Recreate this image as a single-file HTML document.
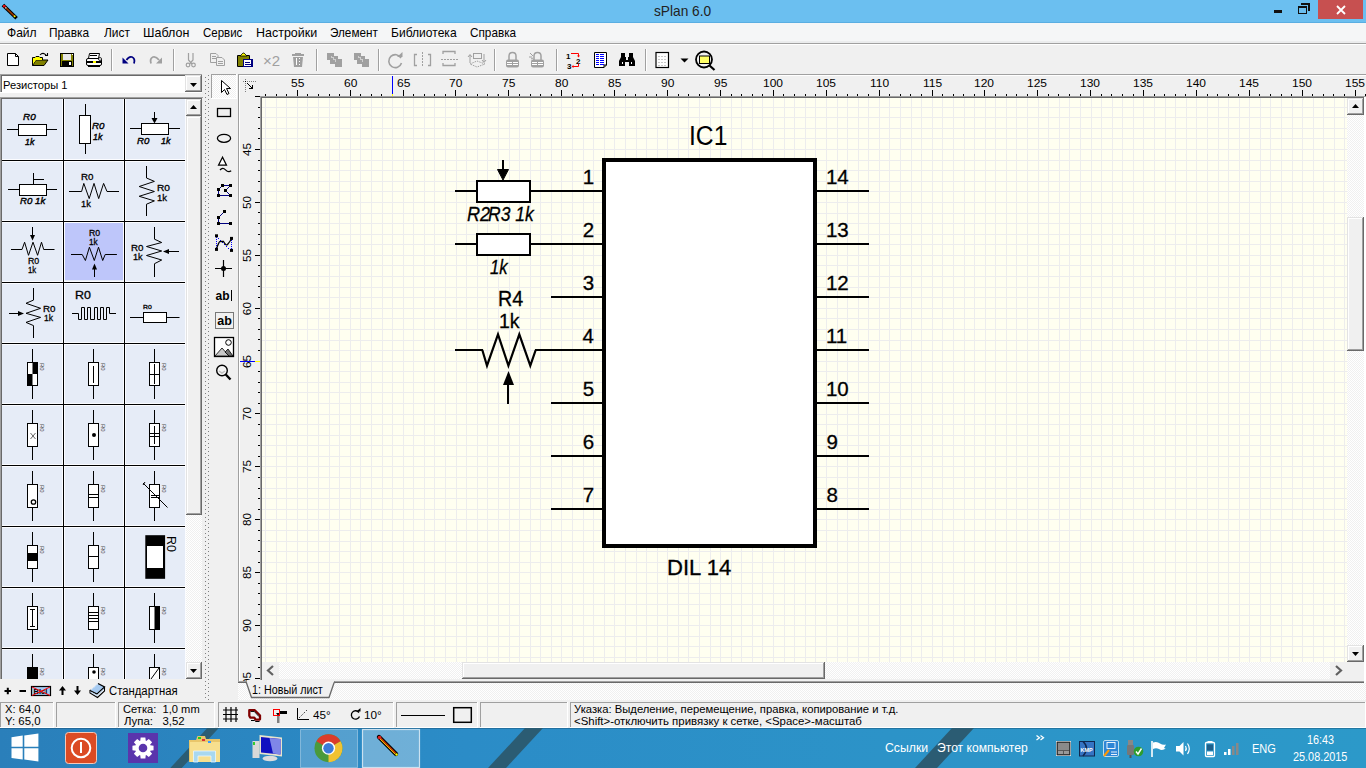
<!DOCTYPE html><html><head><meta charset="utf-8"><style>
html,body{margin:0;padding:0;width:1366px;height:768px;overflow:hidden;background:#f0f0f0;font-family:"Liberation Sans",sans-serif;}
.r,.t,.s{position:absolute;}
.t{white-space:pre;}
</style></head><body>
<div class="r" style="left:0px;top:0px;width:1366px;height:22px;background:#6bbff0;"></div>
<div class="r" style="left:0px;top:22px;width:1366px;height:1px;background:#5aaee2;"></div>
<svg class="s" style="left:0px;top:0px;" width="20" height="22" viewBox="0 0 20 22"><line x1="4.2" y1="6.2" x2="15.3" y2="17" stroke="#000" stroke-width="3.6" stroke-linecap="square"/><line x1="5.5" y1="7.5" x2="14" y2="15.8" stroke="#a33a00" stroke-width="1.6"/><rect x="3" y="5" width="2.6" height="2.4" fill="#e01010"/><rect x="5" y="7" width="1.5" height="1.5" fill="#b0b0b0"/><circle cx="14.6" cy="16.3" r="1" fill="#ff0"/></svg>
<div class="t" style="left:653.72px;top:4.27px;font-size:14.8px;line-height:14.8px;color:#222;font-weight:normal;font-style:normal;transform:scaleX(0.9253);transform-origin:0 0;">sPlan 6.0</div>
<div class="r" style="left:1274px;top:10px;width:8px;height:3px;background:#111;"></div>
<svg class="s" style="left:1298px;top:3px;" width="12" height="11" viewBox="0 0 12 11" shape-rendering="crispEdges"><rect x="0" y="3" width="9" height="8" fill="#111"/><rect x="1" y="5" width="7" height="5" fill="#6bbff0"/><rect x="3" y="0" width="9" height="2" fill="#111"/><rect x="10" y="0" width="2" height="8" fill="#111"/></svg>
<div class="r" style="left:1318px;top:0px;width:45px;height:19px;background:#c75050;"></div>
<svg class="s" style="left:1336px;top:5px;" width="10" height="10" viewBox="0 0 10 10"><path d="M1 1L9 9M9 1L1 9" stroke="#fff" stroke-width="1.8"/></svg>
<div class="r" style="left:0px;top:23px;width:1366px;height:18px;background:#f5f6f7;"></div>
<div class="r" style="left:0px;top:41px;width:1366px;height:2px;background:#ebeced;"></div>
<div class="r" style="left:0px;top:43px;width:1366px;height:1px;background:#a0a0a0;"></div>
<div class="r" style="left:0px;top:44px;width:1366px;height:1px;background:#ffffff;"></div>
<div class="t" style="left:6.81px;top:26.00px;font-size:13px;line-height:13px;color:#000;font-weight:normal;font-style:normal;transform:scaleX(0.9272);transform-origin:0 0;">Файл</div>
<div class="t" style="left:49.44px;top:26.00px;font-size:13px;line-height:13px;color:#000;font-weight:normal;font-style:normal;transform:scaleX(0.9125);transform-origin:0 0;">Правка</div>
<div class="t" style="left:104.10px;top:26.00px;font-size:13px;line-height:13px;color:#000;font-weight:normal;font-style:normal;transform:scaleX(0.9170);transform-origin:0 0;">Лист</div>
<div class="t" style="left:143.27px;top:26.00px;font-size:13px;line-height:13px;color:#000;font-weight:normal;font-style:normal;transform:scaleX(0.9617);transform-origin:0 0;">Шаблон</div>
<div class="t" style="left:203.01px;top:26.00px;font-size:13px;line-height:13px;color:#000;font-weight:normal;font-style:normal;transform:scaleX(0.8827);transform-origin:0 0;">Сервис</div>
<div class="t" style="left:255.97px;top:26.00px;font-size:13px;line-height:13px;color:#000;font-weight:normal;font-style:normal;transform:scaleX(0.9598);transform-origin:0 0;">Настройки</div>
<div class="t" style="left:330.40px;top:26.00px;font-size:13px;line-height:13px;color:#000;font-weight:normal;font-style:normal;transform:scaleX(0.9013);transform-origin:0 0;">Элемент</div>
<div class="t" style="left:391.00px;top:26.00px;font-size:13px;line-height:13px;color:#000;font-weight:normal;font-style:normal;transform:scaleX(0.9280);transform-origin:0 0;">Библиотека</div>
<div class="t" style="left:470.40px;top:26.00px;font-size:13px;line-height:13px;color:#000;font-weight:normal;font-style:normal;transform:scaleX(0.9041);transform-origin:0 0;">Справка</div>
<div class="r" style="left:0px;top:45px;width:1366px;height:29px;background:#f0f0f0;"></div>
<div class="r" style="left:111px;top:49px;width:1px;height:22px;background:#a0a0a0;"></div>
<div class="r" style="left:112px;top:49px;width:1px;height:22px;background:#ffffff;"></div>
<div class="r" style="left:173px;top:49px;width:1px;height:22px;background:#a0a0a0;"></div>
<div class="r" style="left:174px;top:49px;width:1px;height:22px;background:#ffffff;"></div>
<div class="r" style="left:316px;top:49px;width:1px;height:22px;background:#a0a0a0;"></div>
<div class="r" style="left:317px;top:49px;width:1px;height:22px;background:#ffffff;"></div>
<div class="r" style="left:378px;top:49px;width:1px;height:22px;background:#a0a0a0;"></div>
<div class="r" style="left:379px;top:49px;width:1px;height:22px;background:#ffffff;"></div>
<div class="r" style="left:494px;top:49px;width:1px;height:22px;background:#a0a0a0;"></div>
<div class="r" style="left:495px;top:49px;width:1px;height:22px;background:#ffffff;"></div>
<div class="r" style="left:556px;top:49px;width:1px;height:22px;background:#a0a0a0;"></div>
<div class="r" style="left:557px;top:49px;width:1px;height:22px;background:#ffffff;"></div>
<div class="r" style="left:645px;top:49px;width:1px;height:22px;background:#a0a0a0;"></div>
<div class="r" style="left:646px;top:49px;width:1px;height:22px;background:#ffffff;"></div>
<div class="r" style="left:0px;top:74px;width:1366px;height:654px;background:#f0f0f0;"></div>
<div class="r" style="left:0px;top:74px;width:202px;height:19px;background:#ffffff;"></div>
<div class="r" style="left:0px;top:74px;width:202px;height:1px;background:#a0a0a0;"></div>
<div class="r" style="left:0px;top:75px;width:201px;height:1px;background:#696969;"></div>
<div class="r" style="left:0px;top:74px;width:1px;height:19px;background:#a0a0a0;"></div>
<div class="r" style="left:1px;top:75px;width:1px;height:17px;background:#696969;"></div>
<div class="r" style="left:0px;top:92px;width:202px;height:1px;background:#ffffff;"></div>
<div class="r" style="left:185px;top:75px;width:17px;height:17px;background:#696969;"></div>
<div class="r" style="left:185px;top:75px;width:16px;height:16px;background:#e3e3e3;"></div>
<div class="r" style="left:186px;top:76px;width:15px;height:15px;background:#a0a0a0;"></div>
<div class="r" style="left:186px;top:76px;width:14px;height:14px;background:#ffffff;"></div>
<div class="r" style="left:187px;top:77px;width:13px;height:13px;background:#f0f0f0;"></div>
<svg class="s" style="left:190px;top:83px;" width="7" height="4" viewBox="0 0 7 4"><path d="M0 0H7L3.5 4Z" fill="#000"/></svg>
<div class="t" style="left:2.68px;top:79.18px;font-size:11.6px;line-height:11.6px;color:#000;font-weight:normal;font-style:normal;transform:scaleX(0.9604);transform-origin:0 0;">Резисторы 1</div>
<svg class="s" style="left:205px;top:75px;" width="4" height="625" viewBox="0 0 4 625" shape-rendering="crispEdges"><rect x="0" y="2" width="1" height="1" fill="#808080"/><rect x="3" y="0" width="1" height="1" fill="#808080"/><rect x="0" y="6" width="1" height="1" fill="#808080"/><rect x="3" y="4" width="1" height="1" fill="#808080"/><rect x="0" y="10" width="1" height="1" fill="#808080"/><rect x="3" y="8" width="1" height="1" fill="#808080"/><rect x="0" y="14" width="1" height="1" fill="#808080"/><rect x="3" y="12" width="1" height="1" fill="#808080"/><rect x="0" y="18" width="1" height="1" fill="#808080"/><rect x="3" y="16" width="1" height="1" fill="#808080"/><rect x="0" y="22" width="1" height="1" fill="#808080"/><rect x="3" y="20" width="1" height="1" fill="#808080"/><rect x="0" y="26" width="1" height="1" fill="#808080"/><rect x="3" y="24" width="1" height="1" fill="#808080"/><rect x="0" y="30" width="1" height="1" fill="#808080"/><rect x="3" y="28" width="1" height="1" fill="#808080"/><rect x="0" y="34" width="1" height="1" fill="#808080"/><rect x="3" y="32" width="1" height="1" fill="#808080"/><rect x="0" y="38" width="1" height="1" fill="#808080"/><rect x="3" y="36" width="1" height="1" fill="#808080"/><rect x="0" y="42" width="1" height="1" fill="#808080"/><rect x="3" y="40" width="1" height="1" fill="#808080"/><rect x="0" y="46" width="1" height="1" fill="#808080"/><rect x="3" y="44" width="1" height="1" fill="#808080"/><rect x="0" y="50" width="1" height="1" fill="#808080"/><rect x="3" y="48" width="1" height="1" fill="#808080"/><rect x="0" y="54" width="1" height="1" fill="#808080"/><rect x="3" y="52" width="1" height="1" fill="#808080"/><rect x="0" y="58" width="1" height="1" fill="#808080"/><rect x="3" y="56" width="1" height="1" fill="#808080"/><rect x="0" y="62" width="1" height="1" fill="#808080"/><rect x="3" y="60" width="1" height="1" fill="#808080"/><rect x="0" y="66" width="1" height="1" fill="#808080"/><rect x="3" y="64" width="1" height="1" fill="#808080"/><rect x="0" y="70" width="1" height="1" fill="#808080"/><rect x="3" y="68" width="1" height="1" fill="#808080"/><rect x="0" y="74" width="1" height="1" fill="#808080"/><rect x="3" y="72" width="1" height="1" fill="#808080"/><rect x="0" y="78" width="1" height="1" fill="#808080"/><rect x="3" y="76" width="1" height="1" fill="#808080"/><rect x="0" y="82" width="1" height="1" fill="#808080"/><rect x="3" y="80" width="1" height="1" fill="#808080"/><rect x="0" y="86" width="1" height="1" fill="#808080"/><rect x="3" y="84" width="1" height="1" fill="#808080"/><rect x="0" y="90" width="1" height="1" fill="#808080"/><rect x="3" y="88" width="1" height="1" fill="#808080"/><rect x="0" y="94" width="1" height="1" fill="#808080"/><rect x="3" y="92" width="1" height="1" fill="#808080"/><rect x="0" y="98" width="1" height="1" fill="#808080"/><rect x="3" y="96" width="1" height="1" fill="#808080"/><rect x="0" y="102" width="1" height="1" fill="#808080"/><rect x="3" y="100" width="1" height="1" fill="#808080"/><rect x="0" y="106" width="1" height="1" fill="#808080"/><rect x="3" y="104" width="1" height="1" fill="#808080"/><rect x="0" y="110" width="1" height="1" fill="#808080"/><rect x="3" y="108" width="1" height="1" fill="#808080"/><rect x="0" y="114" width="1" height="1" fill="#808080"/><rect x="3" y="112" width="1" height="1" fill="#808080"/><rect x="0" y="118" width="1" height="1" fill="#808080"/><rect x="3" y="116" width="1" height="1" fill="#808080"/><rect x="0" y="122" width="1" height="1" fill="#808080"/><rect x="3" y="120" width="1" height="1" fill="#808080"/><rect x="0" y="126" width="1" height="1" fill="#808080"/><rect x="3" y="124" width="1" height="1" fill="#808080"/><rect x="0" y="130" width="1" height="1" fill="#808080"/><rect x="3" y="128" width="1" height="1" fill="#808080"/><rect x="0" y="134" width="1" height="1" fill="#808080"/><rect x="3" y="132" width="1" height="1" fill="#808080"/><rect x="0" y="138" width="1" height="1" fill="#808080"/><rect x="3" y="136" width="1" height="1" fill="#808080"/><rect x="0" y="142" width="1" height="1" fill="#808080"/><rect x="3" y="140" width="1" height="1" fill="#808080"/><rect x="0" y="146" width="1" height="1" fill="#808080"/><rect x="3" y="144" width="1" height="1" fill="#808080"/><rect x="0" y="150" width="1" height="1" fill="#808080"/><rect x="3" y="148" width="1" height="1" fill="#808080"/><rect x="0" y="154" width="1" height="1" fill="#808080"/><rect x="3" y="152" width="1" height="1" fill="#808080"/><rect x="0" y="158" width="1" height="1" fill="#808080"/><rect x="3" y="156" width="1" height="1" fill="#808080"/><rect x="0" y="162" width="1" height="1" fill="#808080"/><rect x="3" y="160" width="1" height="1" fill="#808080"/><rect x="0" y="166" width="1" height="1" fill="#808080"/><rect x="3" y="164" width="1" height="1" fill="#808080"/><rect x="0" y="170" width="1" height="1" fill="#808080"/><rect x="3" y="168" width="1" height="1" fill="#808080"/><rect x="0" y="174" width="1" height="1" fill="#808080"/><rect x="3" y="172" width="1" height="1" fill="#808080"/><rect x="0" y="178" width="1" height="1" fill="#808080"/><rect x="3" y="176" width="1" height="1" fill="#808080"/><rect x="0" y="182" width="1" height="1" fill="#808080"/><rect x="3" y="180" width="1" height="1" fill="#808080"/><rect x="0" y="186" width="1" height="1" fill="#808080"/><rect x="3" y="184" width="1" height="1" fill="#808080"/><rect x="0" y="190" width="1" height="1" fill="#808080"/><rect x="3" y="188" width="1" height="1" fill="#808080"/><rect x="0" y="194" width="1" height="1" fill="#808080"/><rect x="3" y="192" width="1" height="1" fill="#808080"/><rect x="0" y="198" width="1" height="1" fill="#808080"/><rect x="3" y="196" width="1" height="1" fill="#808080"/><rect x="0" y="202" width="1" height="1" fill="#808080"/><rect x="3" y="200" width="1" height="1" fill="#808080"/><rect x="0" y="206" width="1" height="1" fill="#808080"/><rect x="3" y="204" width="1" height="1" fill="#808080"/><rect x="0" y="210" width="1" height="1" fill="#808080"/><rect x="3" y="208" width="1" height="1" fill="#808080"/><rect x="0" y="214" width="1" height="1" fill="#808080"/><rect x="3" y="212" width="1" height="1" fill="#808080"/><rect x="0" y="218" width="1" height="1" fill="#808080"/><rect x="3" y="216" width="1" height="1" fill="#808080"/><rect x="0" y="222" width="1" height="1" fill="#808080"/><rect x="3" y="220" width="1" height="1" fill="#808080"/><rect x="0" y="226" width="1" height="1" fill="#808080"/><rect x="3" y="224" width="1" height="1" fill="#808080"/><rect x="0" y="230" width="1" height="1" fill="#808080"/><rect x="3" y="228" width="1" height="1" fill="#808080"/><rect x="0" y="234" width="1" height="1" fill="#808080"/><rect x="3" y="232" width="1" height="1" fill="#808080"/><rect x="0" y="238" width="1" height="1" fill="#808080"/><rect x="3" y="236" width="1" height="1" fill="#808080"/><rect x="0" y="242" width="1" height="1" fill="#808080"/><rect x="3" y="240" width="1" height="1" fill="#808080"/><rect x="0" y="246" width="1" height="1" fill="#808080"/><rect x="3" y="244" width="1" height="1" fill="#808080"/><rect x="0" y="250" width="1" height="1" fill="#808080"/><rect x="3" y="248" width="1" height="1" fill="#808080"/><rect x="0" y="254" width="1" height="1" fill="#808080"/><rect x="3" y="252" width="1" height="1" fill="#808080"/><rect x="0" y="258" width="1" height="1" fill="#808080"/><rect x="3" y="256" width="1" height="1" fill="#808080"/><rect x="0" y="262" width="1" height="1" fill="#808080"/><rect x="3" y="260" width="1" height="1" fill="#808080"/><rect x="0" y="266" width="1" height="1" fill="#808080"/><rect x="3" y="264" width="1" height="1" fill="#808080"/><rect x="0" y="270" width="1" height="1" fill="#808080"/><rect x="3" y="268" width="1" height="1" fill="#808080"/><rect x="0" y="274" width="1" height="1" fill="#808080"/><rect x="3" y="272" width="1" height="1" fill="#808080"/><rect x="0" y="278" width="1" height="1" fill="#808080"/><rect x="3" y="276" width="1" height="1" fill="#808080"/><rect x="0" y="282" width="1" height="1" fill="#808080"/><rect x="3" y="280" width="1" height="1" fill="#808080"/><rect x="0" y="286" width="1" height="1" fill="#808080"/><rect x="3" y="284" width="1" height="1" fill="#808080"/><rect x="0" y="290" width="1" height="1" fill="#808080"/><rect x="3" y="288" width="1" height="1" fill="#808080"/><rect x="0" y="294" width="1" height="1" fill="#808080"/><rect x="3" y="292" width="1" height="1" fill="#808080"/><rect x="0" y="298" width="1" height="1" fill="#808080"/><rect x="3" y="296" width="1" height="1" fill="#808080"/><rect x="0" y="302" width="1" height="1" fill="#808080"/><rect x="3" y="300" width="1" height="1" fill="#808080"/><rect x="0" y="306" width="1" height="1" fill="#808080"/><rect x="3" y="304" width="1" height="1" fill="#808080"/><rect x="0" y="310" width="1" height="1" fill="#808080"/><rect x="3" y="308" width="1" height="1" fill="#808080"/><rect x="0" y="314" width="1" height="1" fill="#808080"/><rect x="3" y="312" width="1" height="1" fill="#808080"/><rect x="0" y="318" width="1" height="1" fill="#808080"/><rect x="3" y="316" width="1" height="1" fill="#808080"/><rect x="0" y="322" width="1" height="1" fill="#808080"/><rect x="3" y="320" width="1" height="1" fill="#808080"/><rect x="0" y="326" width="1" height="1" fill="#808080"/><rect x="3" y="324" width="1" height="1" fill="#808080"/><rect x="0" y="330" width="1" height="1" fill="#808080"/><rect x="3" y="328" width="1" height="1" fill="#808080"/><rect x="0" y="334" width="1" height="1" fill="#808080"/><rect x="3" y="332" width="1" height="1" fill="#808080"/><rect x="0" y="338" width="1" height="1" fill="#808080"/><rect x="3" y="336" width="1" height="1" fill="#808080"/><rect x="0" y="342" width="1" height="1" fill="#808080"/><rect x="3" y="340" width="1" height="1" fill="#808080"/><rect x="0" y="346" width="1" height="1" fill="#808080"/><rect x="3" y="344" width="1" height="1" fill="#808080"/><rect x="0" y="350" width="1" height="1" fill="#808080"/><rect x="3" y="348" width="1" height="1" fill="#808080"/><rect x="0" y="354" width="1" height="1" fill="#808080"/><rect x="3" y="352" width="1" height="1" fill="#808080"/><rect x="0" y="358" width="1" height="1" fill="#808080"/><rect x="3" y="356" width="1" height="1" fill="#808080"/><rect x="0" y="362" width="1" height="1" fill="#808080"/><rect x="3" y="360" width="1" height="1" fill="#808080"/><rect x="0" y="366" width="1" height="1" fill="#808080"/><rect x="3" y="364" width="1" height="1" fill="#808080"/><rect x="0" y="370" width="1" height="1" fill="#808080"/><rect x="3" y="368" width="1" height="1" fill="#808080"/><rect x="0" y="374" width="1" height="1" fill="#808080"/><rect x="3" y="372" width="1" height="1" fill="#808080"/><rect x="0" y="378" width="1" height="1" fill="#808080"/><rect x="3" y="376" width="1" height="1" fill="#808080"/><rect x="0" y="382" width="1" height="1" fill="#808080"/><rect x="3" y="380" width="1" height="1" fill="#808080"/><rect x="0" y="386" width="1" height="1" fill="#808080"/><rect x="3" y="384" width="1" height="1" fill="#808080"/><rect x="0" y="390" width="1" height="1" fill="#808080"/><rect x="3" y="388" width="1" height="1" fill="#808080"/><rect x="0" y="394" width="1" height="1" fill="#808080"/><rect x="3" y="392" width="1" height="1" fill="#808080"/><rect x="0" y="398" width="1" height="1" fill="#808080"/><rect x="3" y="396" width="1" height="1" fill="#808080"/><rect x="0" y="402" width="1" height="1" fill="#808080"/><rect x="3" y="400" width="1" height="1" fill="#808080"/><rect x="0" y="406" width="1" height="1" fill="#808080"/><rect x="3" y="404" width="1" height="1" fill="#808080"/><rect x="0" y="410" width="1" height="1" fill="#808080"/><rect x="3" y="408" width="1" height="1" fill="#808080"/><rect x="0" y="414" width="1" height="1" fill="#808080"/><rect x="3" y="412" width="1" height="1" fill="#808080"/><rect x="0" y="418" width="1" height="1" fill="#808080"/><rect x="3" y="416" width="1" height="1" fill="#808080"/><rect x="0" y="422" width="1" height="1" fill="#808080"/><rect x="3" y="420" width="1" height="1" fill="#808080"/><rect x="0" y="426" width="1" height="1" fill="#808080"/><rect x="3" y="424" width="1" height="1" fill="#808080"/><rect x="0" y="430" width="1" height="1" fill="#808080"/><rect x="3" y="428" width="1" height="1" fill="#808080"/><rect x="0" y="434" width="1" height="1" fill="#808080"/><rect x="3" y="432" width="1" height="1" fill="#808080"/><rect x="0" y="438" width="1" height="1" fill="#808080"/><rect x="3" y="436" width="1" height="1" fill="#808080"/><rect x="0" y="442" width="1" height="1" fill="#808080"/><rect x="3" y="440" width="1" height="1" fill="#808080"/><rect x="0" y="446" width="1" height="1" fill="#808080"/><rect x="3" y="444" width="1" height="1" fill="#808080"/><rect x="0" y="450" width="1" height="1" fill="#808080"/><rect x="3" y="448" width="1" height="1" fill="#808080"/><rect x="0" y="454" width="1" height="1" fill="#808080"/><rect x="3" y="452" width="1" height="1" fill="#808080"/><rect x="0" y="458" width="1" height="1" fill="#808080"/><rect x="3" y="456" width="1" height="1" fill="#808080"/><rect x="0" y="462" width="1" height="1" fill="#808080"/><rect x="3" y="460" width="1" height="1" fill="#808080"/><rect x="0" y="466" width="1" height="1" fill="#808080"/><rect x="3" y="464" width="1" height="1" fill="#808080"/><rect x="0" y="470" width="1" height="1" fill="#808080"/><rect x="3" y="468" width="1" height="1" fill="#808080"/><rect x="0" y="474" width="1" height="1" fill="#808080"/><rect x="3" y="472" width="1" height="1" fill="#808080"/><rect x="0" y="478" width="1" height="1" fill="#808080"/><rect x="3" y="476" width="1" height="1" fill="#808080"/><rect x="0" y="482" width="1" height="1" fill="#808080"/><rect x="3" y="480" width="1" height="1" fill="#808080"/><rect x="0" y="486" width="1" height="1" fill="#808080"/><rect x="3" y="484" width="1" height="1" fill="#808080"/><rect x="0" y="490" width="1" height="1" fill="#808080"/><rect x="3" y="488" width="1" height="1" fill="#808080"/><rect x="0" y="494" width="1" height="1" fill="#808080"/><rect x="3" y="492" width="1" height="1" fill="#808080"/><rect x="0" y="498" width="1" height="1" fill="#808080"/><rect x="3" y="496" width="1" height="1" fill="#808080"/><rect x="0" y="502" width="1" height="1" fill="#808080"/><rect x="3" y="500" width="1" height="1" fill="#808080"/><rect x="0" y="506" width="1" height="1" fill="#808080"/><rect x="3" y="504" width="1" height="1" fill="#808080"/><rect x="0" y="510" width="1" height="1" fill="#808080"/><rect x="3" y="508" width="1" height="1" fill="#808080"/><rect x="0" y="514" width="1" height="1" fill="#808080"/><rect x="3" y="512" width="1" height="1" fill="#808080"/><rect x="0" y="518" width="1" height="1" fill="#808080"/><rect x="3" y="516" width="1" height="1" fill="#808080"/><rect x="0" y="522" width="1" height="1" fill="#808080"/><rect x="3" y="520" width="1" height="1" fill="#808080"/><rect x="0" y="526" width="1" height="1" fill="#808080"/><rect x="3" y="524" width="1" height="1" fill="#808080"/><rect x="0" y="530" width="1" height="1" fill="#808080"/><rect x="3" y="528" width="1" height="1" fill="#808080"/><rect x="0" y="534" width="1" height="1" fill="#808080"/><rect x="3" y="532" width="1" height="1" fill="#808080"/><rect x="0" y="538" width="1" height="1" fill="#808080"/><rect x="3" y="536" width="1" height="1" fill="#808080"/><rect x="0" y="542" width="1" height="1" fill="#808080"/><rect x="3" y="540" width="1" height="1" fill="#808080"/><rect x="0" y="546" width="1" height="1" fill="#808080"/><rect x="3" y="544" width="1" height="1" fill="#808080"/><rect x="0" y="550" width="1" height="1" fill="#808080"/><rect x="3" y="548" width="1" height="1" fill="#808080"/><rect x="0" y="554" width="1" height="1" fill="#808080"/><rect x="3" y="552" width="1" height="1" fill="#808080"/><rect x="0" y="558" width="1" height="1" fill="#808080"/><rect x="3" y="556" width="1" height="1" fill="#808080"/><rect x="0" y="562" width="1" height="1" fill="#808080"/><rect x="3" y="560" width="1" height="1" fill="#808080"/><rect x="0" y="566" width="1" height="1" fill="#808080"/><rect x="3" y="564" width="1" height="1" fill="#808080"/><rect x="0" y="570" width="1" height="1" fill="#808080"/><rect x="3" y="568" width="1" height="1" fill="#808080"/><rect x="0" y="574" width="1" height="1" fill="#808080"/><rect x="3" y="572" width="1" height="1" fill="#808080"/><rect x="0" y="578" width="1" height="1" fill="#808080"/><rect x="3" y="576" width="1" height="1" fill="#808080"/><rect x="0" y="582" width="1" height="1" fill="#808080"/><rect x="3" y="580" width="1" height="1" fill="#808080"/><rect x="0" y="586" width="1" height="1" fill="#808080"/><rect x="3" y="584" width="1" height="1" fill="#808080"/><rect x="0" y="590" width="1" height="1" fill="#808080"/><rect x="3" y="588" width="1" height="1" fill="#808080"/><rect x="0" y="594" width="1" height="1" fill="#808080"/><rect x="3" y="592" width="1" height="1" fill="#808080"/><rect x="0" y="598" width="1" height="1" fill="#808080"/><rect x="3" y="596" width="1" height="1" fill="#808080"/><rect x="0" y="602" width="1" height="1" fill="#808080"/><rect x="3" y="600" width="1" height="1" fill="#808080"/><rect x="0" y="606" width="1" height="1" fill="#808080"/><rect x="3" y="604" width="1" height="1" fill="#808080"/><rect x="0" y="610" width="1" height="1" fill="#808080"/><rect x="3" y="608" width="1" height="1" fill="#808080"/><rect x="0" y="614" width="1" height="1" fill="#808080"/><rect x="3" y="612" width="1" height="1" fill="#808080"/><rect x="0" y="618" width="1" height="1" fill="#808080"/><rect x="3" y="616" width="1" height="1" fill="#808080"/><rect x="0" y="622" width="1" height="1" fill="#808080"/><rect x="3" y="620" width="1" height="1" fill="#808080"/><rect x="0" y="626" width="1" height="1" fill="#808080"/><rect x="3" y="624" width="1" height="1" fill="#808080"/></svg>
<div class="r" style="left:0px;top:97px;width:202px;height:582px;background:#f0f0f0;"></div>
<div class="r" style="left:0px;top:97px;width:203px;height:1px;background:#a0a0a0;"></div>
<div class="r" style="left:0px;top:98px;width:202px;height:1px;background:#696969;"></div>
<div class="r" style="left:0px;top:97px;width:1px;height:582px;background:#a0a0a0;"></div>
<div class="r" style="left:1px;top:98px;width:1px;height:581px;background:#696969;"></div>
<div class="r" style="left:2px;top:99px;width:184px;height:580px;background:#e6ecf7;"></div>
<div class="r" style="left:2px;top:159px;width:184px;height:1px;background:#fbfcff;"></div>
<div class="r" style="left:2px;top:161px;width:184px;height:1px;background:#fbfcff;"></div>
<div class="r" style="left:2px;top:220px;width:184px;height:1px;background:#fbfcff;"></div>
<div class="r" style="left:2px;top:222px;width:184px;height:1px;background:#fbfcff;"></div>
<div class="r" style="left:2px;top:281px;width:184px;height:1px;background:#fbfcff;"></div>
<div class="r" style="left:2px;top:283px;width:184px;height:1px;background:#fbfcff;"></div>
<div class="r" style="left:2px;top:342px;width:184px;height:1px;background:#fbfcff;"></div>
<div class="r" style="left:2px;top:344px;width:184px;height:1px;background:#fbfcff;"></div>
<div class="r" style="left:2px;top:403px;width:184px;height:1px;background:#fbfcff;"></div>
<div class="r" style="left:2px;top:405px;width:184px;height:1px;background:#fbfcff;"></div>
<div class="r" style="left:2px;top:464px;width:184px;height:1px;background:#fbfcff;"></div>
<div class="r" style="left:2px;top:466px;width:184px;height:1px;background:#fbfcff;"></div>
<div class="r" style="left:2px;top:525px;width:184px;height:1px;background:#fbfcff;"></div>
<div class="r" style="left:2px;top:527px;width:184px;height:1px;background:#fbfcff;"></div>
<div class="r" style="left:2px;top:586px;width:184px;height:1px;background:#fbfcff;"></div>
<div class="r" style="left:2px;top:588px;width:184px;height:1px;background:#fbfcff;"></div>
<div class="r" style="left:2px;top:647px;width:184px;height:1px;background:#fbfcff;"></div>
<div class="r" style="left:2px;top:649px;width:184px;height:1px;background:#fbfcff;"></div>
<div class="r" style="left:62px;top:99px;width:1px;height:580px;background:#fbfcff;"></div>
<div class="r" style="left:64px;top:99px;width:1px;height:580px;background:#fbfcff;"></div>
<div class="r" style="left:123px;top:99px;width:1px;height:580px;background:#fbfcff;"></div>
<div class="r" style="left:125px;top:99px;width:1px;height:580px;background:#fbfcff;"></div>
<div class="r" style="left:185px;top:99px;width:1px;height:580px;background:#fbfcff;"></div>
<div class="r" style="left:2px;top:160px;width:183px;height:1px;background:#000;"></div>
<div class="r" style="left:2px;top:221px;width:183px;height:1px;background:#000;"></div>
<div class="r" style="left:2px;top:282px;width:183px;height:1px;background:#000;"></div>
<div class="r" style="left:2px;top:343px;width:183px;height:1px;background:#000;"></div>
<div class="r" style="left:2px;top:404px;width:183px;height:1px;background:#000;"></div>
<div class="r" style="left:2px;top:465px;width:183px;height:1px;background:#000;"></div>
<div class="r" style="left:2px;top:526px;width:183px;height:1px;background:#000;"></div>
<div class="r" style="left:2px;top:587px;width:183px;height:1px;background:#000;"></div>
<div class="r" style="left:2px;top:648px;width:183px;height:1px;background:#000;"></div>
<div class="r" style="left:63px;top:99px;width:1px;height:580px;background:#000;"></div>
<div class="r" style="left:124px;top:99px;width:1px;height:580px;background:#000;"></div>
<div class="r" style="left:65px;top:223px;width:58px;height:57px;background:#bec6fa;"></div>
<div class="t" style="left:23.49px;top:111.70px;font-size:9.8px;line-height:9.8px;color:#000;font-weight:normal;font-style:italic;transform:scaleX(1.0132);transform-origin:0 0;-webkit-text-stroke:0.4px #000;">R0</div>
<div class="t" style="left:24.77px;top:136.70px;font-size:9.8px;line-height:9.8px;color:#000;font-weight:normal;font-style:italic;transform:scaleX(0.9049);transform-origin:0 0;-webkit-text-stroke:0.4px #000;">1k</div>
<div class="t" style="left:92.49px;top:120.70px;font-size:9.8px;line-height:9.8px;color:#000;font-weight:normal;font-style:italic;transform:scaleX(0.9967);transform-origin:0 0;-webkit-text-stroke:0.4px #000;">R0</div>
<div class="t" style="left:92.77px;top:131.70px;font-size:9.8px;line-height:9.8px;color:#000;font-weight:normal;font-style:italic;transform:scaleX(0.9049);transform-origin:0 0;-webkit-text-stroke:0.4px #000;">1k</div>
<div class="t" style="left:136.50px;top:135.70px;font-size:9.8px;line-height:9.8px;color:#000;font-weight:normal;font-style:italic;transform:scaleX(0.9885);transform-origin:0 0;-webkit-text-stroke:0.4px #000;">R0</div>
<div class="t" style="left:160.86px;top:135.70px;font-size:9.8px;line-height:9.8px;color:#000;font-weight:normal;font-style:italic;transform:scaleX(0.9144);transform-origin:0 0;-webkit-text-stroke:0.4px #000;">1k</div>
<div class="t" style="left:19.70px;top:196.20px;font-size:9.8px;line-height:9.8px;color:#000;font-weight:normal;font-style:italic;transform:scaleX(0.9883);transform-origin:0 0;-webkit-text-stroke:0.4px #000;">R0 1k</div>
<div class="t" style="left:80.99px;top:172.07px;font-size:9.6px;line-height:9.6px;color:#000;font-weight:normal;font-style:normal;transform:scaleX(1.0169);transform-origin:0 0;-webkit-text-stroke:0.3px #000;">R0</div>
<div class="t" style="left:81.09px;top:199.47px;font-size:9.6px;line-height:9.6px;color:#000;font-weight:normal;font-style:normal;transform:scaleX(0.9660);transform-origin:0 0;-webkit-text-stroke:0.3px #000;">1k</div>
<div class="t" style="left:156.66px;top:182.57px;font-size:9.6px;line-height:9.6px;color:#000;font-weight:normal;font-style:normal;transform:scaleX(1.0619);transform-origin:0 0;-webkit-text-stroke:0.3px #000;">R0</div>
<div class="t" style="left:156.78px;top:192.67px;font-size:9.6px;line-height:9.6px;color:#000;font-weight:normal;font-style:normal;transform:scaleX(0.9873);transform-origin:0 0;-webkit-text-stroke:0.3px #000;">1k</div>
<div class="t" style="left:28.07px;top:256.47px;font-size:9.6px;line-height:9.6px;color:#000;font-weight:normal;font-style:normal;transform:scaleX(0.9179);transform-origin:0 0;-webkit-text-stroke:0.3px #000;">R0</div>
<div class="t" style="left:28.21px;top:265.37px;font-size:9.6px;line-height:9.6px;color:#000;font-weight:normal;font-style:normal;transform:scaleX(0.8068);transform-origin:0 0;-webkit-text-stroke:0.3px #000;">1k</div>
<div class="t" style="left:89.08px;top:227.67px;font-size:9.6px;line-height:9.6px;color:#000;font-weight:normal;font-style:normal;transform:scaleX(0.9089);transform-origin:0 0;-webkit-text-stroke:0.3px #000;">R0</div>
<div class="t" style="left:89.17px;top:236.97px;font-size:9.6px;line-height:9.6px;color:#000;font-weight:normal;font-style:normal;transform:scaleX(0.8599);transform-origin:0 0;-webkit-text-stroke:0.3px #000;">1k</div>
<div class="t" style="left:130.99px;top:243.27px;font-size:9.6px;line-height:9.6px;color:#000;font-weight:normal;font-style:normal;transform:scaleX(1.0169);transform-origin:0 0;-webkit-text-stroke:0.3px #000;">R0</div>
<div class="t" style="left:133.40px;top:252.17px;font-size:9.6px;line-height:9.6px;color:#000;font-weight:normal;font-style:normal;transform:scaleX(0.9554);transform-origin:0 0;-webkit-text-stroke:0.3px #000;">1k</div>
<div class="t" style="left:42.89px;top:304.37px;font-size:9.6px;line-height:9.6px;color:#000;font-weight:normal;font-style:normal;transform:scaleX(1.0169);transform-origin:0 0;-webkit-text-stroke:0.3px #000;">R0</div>
<div class="t" style="left:43.75px;top:313.47px;font-size:9.6px;line-height:9.6px;color:#000;font-weight:normal;font-style:normal;transform:scaleX(0.8917);transform-origin:0 0;-webkit-text-stroke:0.3px #000;">1k</div>
<div class="t" style="left:74.67px;top:290.29px;font-size:11px;line-height:11px;color:#000;font-weight:normal;font-style:normal;transform:scaleX(1.1310);transform-origin:0 0;-webkit-text-stroke:0.3px #000;">R0</div>
<div class="t" style="left:142.54px;top:304.32px;font-size:6px;line-height:6px;color:#000;font-weight:normal;font-style:normal;transform:scaleX(1.1375);transform-origin:0 0;-webkit-text-stroke:0.3px #000;">R0</div>
<div class="t" style="left:143.53px;top:313.34px;font-size:5.5px;line-height:5.5px;color:#000;font-weight:normal;font-style:normal;transform:scaleX(1.1118);transform-origin:0 0;-webkit-text-stroke:0.3px #000;">1k</div>
<svg class="s" style="left:0;top:0" width="202" height="679" viewBox="0 0 202 679"><defs><clipPath id="cg"><rect x="2" y="99" width="183" height="580"/></clipPath></defs><g clip-path="url(#cg)"><line x1="7" y1="129.5" x2="18" y2="129.5" stroke="#000" stroke-width="1"/><rect x="18.5" y="124.5" width="28" height="11" fill="#fff" stroke="#000" stroke-width="1"/><line x1="47" y1="129.5" x2="57" y2="129.5" stroke="#000" stroke-width="1"/><line x1="85.5" y1="104" x2="85.5" y2="115" stroke="#000" stroke-width="1"/><rect x="79.5" y="115.5" width="11" height="28" fill="#fff" stroke="#000" stroke-width="1"/><line x1="85.5" y1="144" x2="85.5" y2="154" stroke="#000" stroke-width="1"/><line x1="130" y1="128.5" x2="141" y2="128.5" stroke="#000" stroke-width="1"/><rect x="141.5" y="123.5" width="27" height="11" fill="#fff" stroke="#000" stroke-width="1"/><line x1="169" y1="128.5" x2="180" y2="128.5" stroke="#000" stroke-width="1"/><line x1="154.5" y1="112" x2="154.5" y2="119" stroke="#000" stroke-width="1"/><polygon points="151.5,118 157.5,118 154.5,123.5" fill="#000"/><line x1="8" y1="189.5" x2="19" y2="189.5" stroke="#000" stroke-width="1"/><rect x="19.5" y="184.5" width="27" height="11" fill="#fff" stroke="#000" stroke-width="1"/><line x1="47" y1="189.5" x2="57" y2="189.5" stroke="#000" stroke-width="1"/><line x1="33.5" y1="173" x2="33.5" y2="184" stroke="#000" stroke-width="1"/><line x1="33.5" y1="179.5" x2="44" y2="179.5" stroke="#000" stroke-width="1"/><polyline points="69,191.5 81.6,191.5 83.8,183.4 89.2,198.6 94,183.4 98.7,198.6 103.6,183.4 107,191.5 119,191.5" fill="none" stroke="#000" stroke-width="1"/><polyline points="146.5,166 146.5,178 154.4,181.4 139.2,186.5 154.4,191.5 139.2,196.3 154.4,200.9 146.5,204.2 146.5,216" fill="none" stroke="#000" stroke-width="1"/><polyline points="11,249.5 22,249.5 24.6,242.2 28.5,255.3 33,242.2 37.6,255.3 41.5,242.2 43.7,249.5 54.5,249.5" fill="none" stroke="#000" stroke-width="1"/><line x1="32.5" y1="227" x2="32.5" y2="236" stroke="#000" stroke-width="1"/><polygon points="30,235 35,235 32.5,240.5" fill="#000"/><polyline points="71,254.5 82.2,254.5 85.4,260.5 89.4,247.2 94.3,260.5 98.5,247.2 102.7,260.5 105.2,254.5 116.9,254.5" fill="none" stroke="#000" stroke-width="1"/><line x1="94.5" y1="266" x2="94.5" y2="277" stroke="#000" stroke-width="1"/><polygon points="92,269.5 97,269.5 94.5,263.5" fill="#000"/><polyline points="154.5,227 154.5,239.2 161.7,242.5 146.5,246.5 161.7,251 146.5,255.5 161.7,260 154.5,263.7 154.5,277" fill="none" stroke="#000" stroke-width="1"/><line x1="168" y1="251.5" x2="179" y2="251.5" stroke="#000" stroke-width="1"/><polygon points="169,249 169,254 163,251.5" fill="#000"/><polyline points="33.5,288 33.5,300.1 26,303.3 40.6,308.3 26,313.3 40.6,317.4 26,322.4 33.5,325.6 33.5,338" fill="none" stroke="#000" stroke-width="1"/><line x1="9" y1="313.5" x2="19" y2="313.5" stroke="#000" stroke-width="1"/><polygon points="18,311 18,316 24,313.5" fill="#000"/><polyline points="72,313.5 78.5,313.5 78.5,319.5 81.5,319.5 81.5,307.5 84.5,307.5 84.5,319.5 87.5,319.5 87.5,307.5 90.5,307.5 90.5,319.5 94.5,319.5 94.5,307.5 97.5,307.5 97.5,319.5 100.5,319.5 100.5,307.5 103.5,307.5 103.5,319.5 106.5,319.5 106.5,307.5 109.5,307.5 109.5,313.5 116,313.5" fill="none" stroke="#000" stroke-width="1"/><line x1="130" y1="317.5" x2="143" y2="317.5" stroke="#000" stroke-width="1"/><rect x="143.5" y="312.5" width="23" height="10" fill="#fff" stroke="#000" stroke-width="1"/><line x1="167" y1="317.5" x2="179.5" y2="317.5" stroke="#000" stroke-width="1"/><line x1="32.5" y1="349" x2="32.5" y2="362" stroke="#000" stroke-width="1"/><line x1="32.5" y1="386" x2="32.5" y2="399" stroke="#000" stroke-width="1"/><rect x="27.5" y="362.5" width="10" height="23" fill="#fff" stroke="#000" stroke-width="1"/><g transform="translate(39.5,363) rotate(90)"><text x="0" y="0" font-size="6" font-family="Liberation Sans" fill="#505050">R0</text></g><line x1="93.5" y1="349" x2="93.5" y2="362" stroke="#000" stroke-width="1"/><line x1="93.5" y1="386" x2="93.5" y2="399" stroke="#000" stroke-width="1"/><rect x="88.5" y="362.5" width="10" height="23" fill="#fff" stroke="#000" stroke-width="1"/><g transform="translate(100.5,363) rotate(90)"><text x="0" y="0" font-size="6" font-family="Liberation Sans" fill="#505050">R0</text></g><line x1="154.5" y1="349" x2="154.5" y2="362" stroke="#000" stroke-width="1"/><line x1="154.5" y1="386" x2="154.5" y2="399" stroke="#000" stroke-width="1"/><rect x="149.5" y="362.5" width="10" height="23" fill="#fff" stroke="#000" stroke-width="1"/><g transform="translate(161.5,363) rotate(90)"><text x="0" y="0" font-size="6" font-family="Liberation Sans" fill="#505050">R0</text></g><line x1="32.5" y1="410" x2="32.5" y2="423" stroke="#000" stroke-width="1"/><line x1="32.5" y1="447" x2="32.5" y2="460" stroke="#000" stroke-width="1"/><rect x="27.5" y="423.5" width="10" height="23" fill="#fff" stroke="#000" stroke-width="1"/><g transform="translate(39.5,424) rotate(90)"><text x="0" y="0" font-size="6" font-family="Liberation Sans" fill="#505050">R0</text></g><line x1="93.5" y1="410" x2="93.5" y2="423" stroke="#000" stroke-width="1"/><line x1="93.5" y1="447" x2="93.5" y2="460" stroke="#000" stroke-width="1"/><rect x="88.5" y="423.5" width="10" height="23" fill="#fff" stroke="#000" stroke-width="1"/><g transform="translate(100.5,424) rotate(90)"><text x="0" y="0" font-size="6" font-family="Liberation Sans" fill="#505050">R0</text></g><line x1="154.5" y1="410" x2="154.5" y2="423" stroke="#000" stroke-width="1"/><line x1="154.5" y1="447" x2="154.5" y2="460" stroke="#000" stroke-width="1"/><rect x="149.5" y="423.5" width="10" height="23" fill="#fff" stroke="#000" stroke-width="1"/><g transform="translate(161.5,424) rotate(90)"><text x="0" y="0" font-size="6" font-family="Liberation Sans" fill="#505050">R0</text></g><line x1="32.5" y1="471" x2="32.5" y2="484" stroke="#000" stroke-width="1"/><line x1="32.5" y1="508" x2="32.5" y2="521" stroke="#000" stroke-width="1"/><rect x="27.5" y="484.5" width="10" height="23" fill="#fff" stroke="#000" stroke-width="1"/><g transform="translate(39.5,485) rotate(90)"><text x="0" y="0" font-size="6" font-family="Liberation Sans" fill="#505050">R0</text></g><line x1="93.5" y1="471" x2="93.5" y2="484" stroke="#000" stroke-width="1"/><line x1="93.5" y1="508" x2="93.5" y2="521" stroke="#000" stroke-width="1"/><rect x="88.5" y="484.5" width="10" height="23" fill="#fff" stroke="#000" stroke-width="1"/><g transform="translate(100.5,485) rotate(90)"><text x="0" y="0" font-size="6" font-family="Liberation Sans" fill="#505050">R0</text></g><line x1="154.5" y1="471" x2="154.5" y2="484" stroke="#000" stroke-width="1"/><line x1="154.5" y1="508" x2="154.5" y2="521" stroke="#000" stroke-width="1"/><rect x="149.5" y="484.5" width="10" height="23" fill="#fff" stroke="#000" stroke-width="1"/><g transform="translate(161.5,485) rotate(90)"><text x="0" y="0" font-size="6" font-family="Liberation Sans" fill="#505050">R0</text></g><line x1="32.5" y1="532" x2="32.5" y2="545" stroke="#000" stroke-width="1"/><line x1="32.5" y1="569" x2="32.5" y2="582" stroke="#000" stroke-width="1"/><rect x="27.5" y="545.5" width="10" height="23" fill="#fff" stroke="#000" stroke-width="1"/><g transform="translate(39.5,546) rotate(90)"><text x="0" y="0" font-size="6" font-family="Liberation Sans" fill="#505050">R0</text></g><line x1="93.5" y1="532" x2="93.5" y2="545" stroke="#000" stroke-width="1"/><line x1="93.5" y1="569" x2="93.5" y2="582" stroke="#000" stroke-width="1"/><rect x="88.5" y="545.5" width="10" height="23" fill="#fff" stroke="#000" stroke-width="1"/><g transform="translate(100.5,546) rotate(90)"><text x="0" y="0" font-size="6" font-family="Liberation Sans" fill="#505050">R0</text></g><line x1="32.5" y1="593" x2="32.5" y2="606" stroke="#000" stroke-width="1"/><line x1="32.5" y1="630" x2="32.5" y2="643" stroke="#000" stroke-width="1"/><rect x="27.5" y="606.5" width="10" height="23" fill="#fff" stroke="#000" stroke-width="1"/><g transform="translate(39.5,607) rotate(90)"><text x="0" y="0" font-size="6" font-family="Liberation Sans" fill="#505050">R0</text></g><line x1="93.5" y1="593" x2="93.5" y2="606" stroke="#000" stroke-width="1"/><line x1="93.5" y1="630" x2="93.5" y2="643" stroke="#000" stroke-width="1"/><rect x="88.5" y="606.5" width="10" height="23" fill="#fff" stroke="#000" stroke-width="1"/><g transform="translate(100.5,607) rotate(90)"><text x="0" y="0" font-size="6" font-family="Liberation Sans" fill="#505050">R0</text></g><line x1="154.5" y1="593" x2="154.5" y2="606" stroke="#000" stroke-width="1"/><line x1="154.5" y1="630" x2="154.5" y2="643" stroke="#000" stroke-width="1"/><rect x="149.5" y="606.5" width="10" height="23" fill="#fff" stroke="#000" stroke-width="1"/><g transform="translate(161.5,607) rotate(90)"><text x="0" y="0" font-size="6" font-family="Liberation Sans" fill="#505050">R0</text></g><line x1="32.5" y1="654" x2="32.5" y2="667" stroke="#000" stroke-width="1"/><line x1="32.5" y1="691" x2="32.5" y2="704" stroke="#000" stroke-width="1"/><rect x="27.5" y="667.5" width="10" height="23" fill="#fff" stroke="#000" stroke-width="1"/><g transform="translate(39.5,668) rotate(90)"><text x="0" y="0" font-size="6" font-family="Liberation Sans" fill="#505050">R0</text></g><line x1="93.5" y1="654" x2="93.5" y2="667" stroke="#000" stroke-width="1"/><line x1="93.5" y1="691" x2="93.5" y2="704" stroke="#000" stroke-width="1"/><rect x="88.5" y="667.5" width="10" height="23" fill="#fff" stroke="#000" stroke-width="1"/><g transform="translate(100.5,668) rotate(90)"><text x="0" y="0" font-size="6" font-family="Liberation Sans" fill="#505050">R0</text></g><line x1="154.5" y1="654" x2="154.5" y2="667" stroke="#000" stroke-width="1"/><line x1="154.5" y1="691" x2="154.5" y2="704" stroke="#000" stroke-width="1"/><rect x="149.5" y="667.5" width="10" height="23" fill="#fff" stroke="#000" stroke-width="1"/><g transform="translate(161.5,668) rotate(90)"><text x="0" y="0" font-size="6" font-family="Liberation Sans" fill="#505050">R0</text></g><rect x="32.5" y="363" width="4.5" height="11" fill="#000"/><rect x="28" y="374" width="4.5" height="11" fill="#000"/><line x1="93.5" y1="366" x2="93.5" y2="383" stroke="#000" stroke-width="1"/><line x1="154.5" y1="364" x2="154.5" y2="384" stroke="#000" stroke-width="1"/><line x1="150" y1="374.5" x2="159" y2="374.5" stroke="#000" stroke-width="1"/><path d="M30.5 433L35.5 439M35.5 433L30.5 439" stroke="#555" stroke-width="0.9"/><circle cx="94" cy="435" r="2" fill="#000"/><line x1="154.5" y1="426" x2="154.5" y2="444" stroke="#000" stroke-width="1"/><line x1="150" y1="433.5" x2="159" y2="433.5" stroke="#000" stroke-width="1"/><line x1="150" y1="436.5" x2="159" y2="436.5" stroke="#000" stroke-width="1"/><circle cx="33.5" cy="502" r="2.2" fill="none" stroke="#000" stroke-width="1.3"/><line x1="89" y1="494.5" x2="98" y2="494.5" stroke="#000" stroke-width="1"/><line x1="89" y1="497.5" x2="98" y2="497.5" stroke="#000" stroke-width="1"/><line x1="151" y1="495.5" x2="159" y2="495.5" stroke="#000" stroke-width="1"/><line x1="151" y1="497.5" x2="159" y2="497.5" stroke="#000" stroke-width="1"/><line x1="143" y1="483" x2="167.5" y2="507.5" stroke="#000" stroke-width="1"/><line x1="143" y1="485" x2="145" y2="482" stroke="#000" stroke-width="1"/><rect x="28" y="553" width="10" height="8" fill="#000"/><line x1="89" y1="556.5" x2="98" y2="556.5" stroke="#000" stroke-width="1"/><rect x="145.3" y="535.2" width="19.8" height="43.6" fill="#000"/><rect x="147" y="546" width="16" height="22" fill="#fff"/><g transform="translate(167,536) rotate(90)"><text x="0" y="0" font-size="12.5" font-family="Liberation Sans" fill="#000">R0</text></g><line x1="32.5" y1="609" x2="32.5" y2="627" stroke="#000" stroke-width="1"/><line x1="30" y1="609.5" x2="35" y2="609.5" stroke="#000" stroke-width="1"/><line x1="30" y1="626.5" x2="35" y2="626.5" stroke="#000" stroke-width="1"/><line x1="89" y1="612.5" x2="98" y2="612.5" stroke="#000" stroke-width="1"/><line x1="89" y1="615.5" x2="98" y2="615.5" stroke="#000" stroke-width="1"/><line x1="89" y1="618.5" x2="98" y2="618.5" stroke="#000" stroke-width="1"/><line x1="89" y1="621.5" x2="98" y2="621.5" stroke="#000" stroke-width="1"/><rect x="154.5" y="606" width="5" height="24" fill="#000"/><rect x="28" y="667" width="10" height="24" fill="#000"/><circle cx="94" cy="672" r="1.8" fill="#000"/><line x1="151" y1="679" x2="159" y2="668" stroke="#000" stroke-width="1"/></g></svg>
<div class="r" style="left:186px;top:99px;width:16px;height:580px;background:repeating-conic-gradient(#f0f0f0 0 25%, #ffffff 0 50%) 0 0/2px 2px;"></div>
<div class="r" style="left:186px;top:99px;width:16px;height:17px;background:#696969;"></div>
<div class="r" style="left:186px;top:99px;width:15px;height:16px;background:#e3e3e3;"></div>
<div class="r" style="left:187px;top:100px;width:14px;height:15px;background:#a0a0a0;"></div>
<div class="r" style="left:187px;top:100px;width:13px;height:14px;background:#ffffff;"></div>
<div class="r" style="left:188px;top:101px;width:12px;height:13px;background:#f0f0f0;"></div>
<svg class="s" style="left:190px;top:105px;" width="7" height="4" viewBox="0 0 7 4"><path d="M0 4H7L3.5 0Z" fill="#000"/></svg>
<div class="r" style="left:186px;top:116px;width:16px;height:399px;background:#696969;"></div>
<div class="r" style="left:186px;top:116px;width:15px;height:398px;background:#e3e3e3;"></div>
<div class="r" style="left:187px;top:117px;width:14px;height:397px;background:#a0a0a0;"></div>
<div class="r" style="left:187px;top:117px;width:13px;height:396px;background:#ffffff;"></div>
<div class="r" style="left:188px;top:118px;width:12px;height:395px;background:#f0f0f0;"></div>
<div class="r" style="left:186px;top:662px;width:16px;height:17px;background:#696969;"></div>
<div class="r" style="left:186px;top:662px;width:15px;height:16px;background:#e3e3e3;"></div>
<div class="r" style="left:187px;top:663px;width:14px;height:15px;background:#a0a0a0;"></div>
<div class="r" style="left:187px;top:663px;width:13px;height:14px;background:#ffffff;"></div>
<div class="r" style="left:188px;top:664px;width:12px;height:13px;background:#f0f0f0;"></div>
<svg class="s" style="left:190px;top:669px;" width="7" height="4" viewBox="0 0 7 4"><path d="M0 0H7L3.5 4Z" fill="#000"/></svg>
<div class="r" style="left:211px;top:74px;width:26px;height:25px;background:repeating-conic-gradient(#f0f0f0 0 25%, #ffffff 0 50%) 0 0/2px 2px;"></div>
<div class="r" style="left:211px;top:74px;width:26px;height:1px;background:#a0a0a0;"></div>
<div class="r" style="left:211px;top:74px;width:1px;height:25px;background:#a0a0a0;"></div>
<div class="r" style="left:211px;top:98px;width:26px;height:1px;background:#ffffff;"></div>
<div class="r" style="left:236px;top:74px;width:1px;height:25px;background:#ffffff;"></div>
<svg class="s" style="left:0;top:0" width="240" height="400" viewBox="0 0 240 400"><path d="M221.5 80.5V92.5L224.5 89.5L227 94.5L229 93.5L226.5 88.5H230.5Z" fill="#fff" stroke="#000" stroke-width="1"/><rect x="217.5" y="108.5" width="13" height="8" fill="none" stroke="#000" stroke-width="1.3"/><ellipse cx="224" cy="138.3" rx="6.6" ry="4" fill="none" stroke="#000" stroke-width="1.3"/><path d="M222.5 157.2L218.5 165.2H226.5Z" fill="#fff" stroke="#000" stroke-width="1.2"/><path d="M220 170Q222.7 166.8 225.5 169.8T231.2 170.8" fill="none" stroke="#000" stroke-width="1.2"/><path d="M222.5 185.5H230.5L225.5 190.5L230.5 195.5H218.5V189.5Z" fill="none" stroke="#000080" stroke-width="1"/><rect x="221.0" y="184.0" width="3" height="3" fill="#000"/><rect x="229.0" y="184.0" width="3" height="3" fill="#000"/><rect x="217.0" y="188.0" width="3" height="3" fill="#000"/><rect x="224.0" y="189.0" width="3" height="3" fill="#000"/><rect x="217.0" y="194.0" width="3" height="3" fill="#000"/><rect x="229.0" y="194.0" width="3" height="3" fill="#000"/><path d="M224.5 211.5L218.5 217.5V223.5H230.5" fill="none" stroke="#000080" stroke-width="1"/><rect x="223.0" y="210.0" width="3" height="3" fill="#000"/><rect x="217.0" y="216.0" width="3" height="3" fill="#000"/><rect x="217.0" y="222.0" width="3" height="3" fill="#000"/><rect x="229.0" y="222.0" width="3" height="3" fill="#000"/><path d="M216.5 237V249M231.5 240V249" fill="none" stroke="#0000ff" stroke-width="1" stroke-dasharray="1 1"/><g fill="#0000ff"><rect x="218" y="238" width="1" height="1"/><rect x="220" y="240" width="1" height="1"/><rect x="222" y="242" width="1" height="1"/><rect x="224" y="244" width="1" height="1"/><rect x="226" y="246" width="1" height="1"/><rect x="228" y="248" width="1" height="1"/></g><path d="M216.5 249Q219 241 220.5 241.5H223.5Q226 246 227.5 244.5Q229.5 242 231.5 239" fill="none" stroke="#000" stroke-width="1.3"/><rect x="215.0" y="234.3" width="3" height="3" fill="#000"/><rect x="230.0" y="236.9" width="3" height="3" fill="#000"/><rect x="215.0" y="247.9" width="3" height="3" fill="#000"/><rect x="230.0" y="248.9" width="3" height="3" fill="#000"/><path d="M215 268.5H232M223.5 260V277" stroke="#000" stroke-width="1.2"/><circle cx="223.5" cy="268.5" r="2.5" fill="#000"/><text x="215.5" y="300" font-family="Liberation Sans" font-weight="bold" font-size="12" fill="#000">ab</text><rect x="231" y="290" width="1" height="11" fill="#000"/><rect x="215.5" y="312.5" width="18" height="16" fill="none" stroke="#000" stroke-width="1" stroke-dasharray="1 1"/><text x="217.3" y="325" font-family="Liberation Sans" font-weight="bold" font-size="12.5" fill="#000">ab</text><rect x="214.5" y="337.5" width="19" height="19" fill="#fff" stroke="#000" stroke-width="1.3"/><circle cx="228.5" cy="342.5" r="2.8" fill="#fff" stroke="#000" stroke-width="1"/><path d="M215 356L222 348L229 356Z" fill="#c8c8c8" stroke="#000" stroke-width="0.8"/><path d="M225 352L228 349L233 356H229Z" fill="#707070" stroke="#000" stroke-width="0.8"/><circle cx="222" cy="370.5" r="5.3" fill="#f4f4f4" stroke="#000" stroke-width="1.4"/><path d="M219 371L222 373L225 371" stroke="#c0c0c0" fill="none" stroke-width="1.5"/><path d="M225.8 374.5L230.5 379.5" stroke="#000" stroke-width="2.4"/></svg><svg class="s" style="left:0;top:45px" width="720" height="29" viewBox="0 45 720 29"><path d="M7.5 53.5H15.5L18.5 56.5V65.5H7.5Z" fill="#fff" stroke="#000" stroke-width="1"/><path d="M15.5 53.5V56.5H18.5" fill="none" stroke="#000" stroke-width="1"/><path d="M32.5 57.5H35L36 56.5H39L40 57.5H42.5V60.5" fill="#ffff00" stroke="#000"/><path d="M32.5 57.5V65.5H44L48 60H36L32.5 65.5" fill="#808000" stroke="#000" stroke-width="1"/><path d="M33 58H42V60H36L33 64Z" fill="#ffff00"/><path d="M40 55Q43 51.5 46.5 55.5" fill="none" stroke="#000" stroke-width="1.1"/><path d="M45 55.5H47.5V53" fill="none" stroke="#000" stroke-width="1.1"/><rect x="60" y="53" width="14" height="14" fill="#000"/><rect x="61" y="54" width="12" height="12" fill="#808000"/><rect x="63" y="54" width="8" height="6" fill="#e8e8e8"/><rect x="62" y="61" width="10" height="5" fill="#000"/><rect x="69" y="62" width="2" height="3" fill="#fff"/><rect x="72" y="54" width="1" height="1" fill="#fff"/><path d="M89.5 53.5H99.5L98.5 58.5H88.5Z" fill="#fff" stroke="#000"/><rect x="90" y="55" width="7" height="1" fill="#000"/><rect x="86.5" y="58.5" width="15" height="7" rx="1.5" fill="#fff" stroke="#000"/><rect x="87" y="61" width="14" height="2" fill="#000"/><rect x="93" y="61" width="3" height="2" fill="#ffff00"/><rect x="88" y="65" width="12" height="2" fill="#000"/><circle cx="100" cy="59" r="1.5" fill="#fff" stroke="#000" stroke-width="0.8"/><path d="M126.5 60Q129 56 132 57Q135.5 58.5 134 63.5" fill="none" stroke="#000080" stroke-width="1.8"/><path d="M122.5 57.5V63.5H128.5Z" fill="#000080"/><path d="M159 60Q156 56 153 57Q149.5 58.5 151 63.5" fill="none" stroke="#a0a0a0" stroke-width="1.8"/><path d="M162 57.5V63.5H156Z" fill="#a0a0a0"/><path d="M188.5 53V60L192 64M193 53V60L189.5 64" fill="none" stroke="#a0a0a0" stroke-width="1.2"/><circle cx="188" cy="65" r="1.8" fill="none" stroke="#a0a0a0" stroke-width="1.2"/><circle cx="193.5" cy="65" r="1.8" fill="none" stroke="#a0a0a0" stroke-width="1.2"/><path d="M210.5 53.5H216L218 55.5V62.5H210.5Z" fill="#f0f0f0" stroke="#a0a0a0"/><rect x="212" y="56" width="4" height="1" fill="#a0a0a0"/><rect x="212" y="58" width="4" height="1" fill="#a0a0a0"/><path d="M216.5 57.5H222L224.5 60V65.5H216.5Z" fill="#f0f0f0" stroke="#a0a0a0"/><rect x="218" y="61" width="5" height="1" fill="#a0a0a0"/><rect x="218" y="63" width="5" height="1" fill="#a0a0a0"/><rect x="237" y="55" width="13" height="12" rx="1" fill="#000"/><rect x="238" y="56" width="11" height="10" fill="#808000"/><path d="M240 56L243 53H244L247 56Z" fill="#ffff00" stroke="#000" stroke-width="0.8"/><rect x="243" y="59" width="10" height="8" fill="#000080"/><rect x="244" y="60" width="7" height="6" fill="#fff"/><rect x="245" y="62" width="5" height="1" fill="#000080"/><rect x="245" y="64" width="6" height="1" fill="#000080"/><text x="263" y="65.5" font-family="Liberation Sans" font-size="15" fill="#a0a0a0">×2</text><path d="M295 53H301V54H304V56H292V54H295Z" fill="#a0a0a0"/><path d="M293 57H303L302 67H294Z" fill="#a0a0a0"/><rect x="296" y="58" width="1" height="7" fill="#fff"/><rect x="299" y="58" width="1" height="1" fill="#fff"/><rect x="299" y="61" width="1" height="1" fill="#fff"/><rect x="299" y="64" width="1" height="1" fill="#fff"/><rect x="327" y="53" width="7" height="7" fill="#a0a0a0"/><rect x="335" y="59" width="7" height="8" fill="#a0a0a0"/><rect x="330" y="56" width="8" height="8" fill="#a0a0a0"/><path d="M331 57h2v2h2v2h2" stroke="#fff" stroke-width="1" fill="none" stroke-dasharray="1 1"/><rect x="354" y="53" width="7" height="7" fill="#a0a0a0"/><rect x="362" y="59" width="7" height="8" fill="#a0a0a0"/><rect x="357" y="56" width="8" height="8" fill="#a0a0a0"/><path d="M358 57h2v2h2v2h2" stroke="#fff" stroke-width="1" fill="none" stroke-dasharray="1 1"/><path d="M401 58A6.5 6.5 0 1 0 401.5 63" fill="none" stroke="#a0a0a0" stroke-width="1.6"/><path d="M397 57H402.5V52Z" fill="#a0a0a0"/><path d="M417 54.5H414.5V65.5H417M428 54.5H430.5V65.5H428" fill="none" stroke="#a0a0a0" stroke-width="1.3"/><path d="M422.5 52V67" stroke="#a0a0a0" stroke-width="1" stroke-dasharray="2 1"/><path d="M443 54V51.5H455V54M443 63V65.5H455V63" fill="none" stroke="#a0a0a0" stroke-width="1.3"/><path d="M441 59.5H458" stroke="#a0a0a0" stroke-width="1" stroke-dasharray="2 1"/><rect x="473.5" y="53.5" width="8" height="5" fill="none" stroke="#a0a0a0"/><path d="M470 63V55M468 57L470 54.5L472 57M484 54V62M482 60L484 62.5L486 60" fill="none" stroke="#a0a0a0" stroke-width="1"/><path d="M470 64L477 61L485 64L477 67Z" fill="none" stroke="#a0a0a0" stroke-dasharray="1.5 1"/><path d="M509 60V56Q509 52.5 512.5 52.5Q516 52.5 516 56V60" fill="none" stroke="#a0a0a0" stroke-width="1.5"/><rect x="506" y="59.5" width="13" height="8" rx="2" fill="#a0a0a0"/><rect x="507" y="62" width="11" height="1" fill="#fff"/><rect x="507" y="64" width="11" height="1" fill="#fff"/><rect x="512" y="61" width="1" height="4" fill="#a0a0a0"/><path d="M534 60V56Q534 52.5 537.5 52.5Q541 52.5 541 56V60" fill="none" stroke="#a0a0a0" stroke-width="1.5"/><rect x="531" y="59.5" width="13" height="8" rx="2" fill="#a0a0a0"/><rect x="532" y="62" width="11" height="1" fill="#fff"/><rect x="532" y="64" width="11" height="1" fill="#fff"/><rect x="537" y="61" width="1" height="4" fill="#a0a0a0"/><path d="M530 53L533 56M529 57H532M531 59L533 58" stroke="#a0a0a0" stroke-width="1"/><text x="566" y="58.5" font-family="Liberation Sans" font-weight="bold" font-size="8" fill="#000">1</text><text x="576" y="63.5" font-family="Liberation Sans" font-weight="bold" font-size="8" fill="#000">2</text><text x="567" y="69" font-family="Liberation Sans" font-weight="bold" font-size="8" fill="#000">3</text><path d="M571 53.5H578.5V56" fill="none" stroke="#f00" stroke-width="1"/><path d="M577 55.5H580L578.5 57.5Z" fill="#f00"/><path d="M578.5 63.5V66.5H573" fill="none" stroke="#f00"/><path d="M573.5 65L571.5 66.5L573.5 68Z" fill="#f00"/><path d="M594.5 52.5H606.5V65L604 67.5H594.5Z" fill="#fff" stroke="#000"/><path d="M604 67.5V65H606.5" fill="none" stroke="#000"/><rect x="596" y="54" width="3" height="1" fill="#0000ff"/><rect x="600" y="54" width="4" height="1" fill="#0000ff"/><rect x="596" y="56" width="3" height="1" fill="#0000ff"/><rect x="600" y="56" width="4" height="1" fill="#0000ff"/><rect x="596" y="58" width="3" height="1" fill="#0000ff"/><rect x="600" y="58" width="4" height="1" fill="#0000ff"/><rect x="596" y="60" width="3" height="1" fill="#0000ff"/><rect x="600" y="60" width="4" height="1" fill="#0000ff"/><rect x="596" y="62" width="3" height="1" fill="#0000ff"/><rect x="600" y="62" width="4" height="1" fill="#0000ff"/><rect x="596" y="64" width="3" height="1" fill="#0000ff"/><rect x="600" y="64" width="4" height="1" fill="#0000ff"/><path d="M621 53H625V57H626V60H628V57H629V53H633V57L635 61V66H629V62H625V66H619V61L621 57Z" fill="#000"/><rect x="622" y="62" width="1" height="2" fill="#fff"/><rect x="631" y="62" width="1" height="2" fill="#fff"/><rect x="656" y="52.5" width="12.5" height="15" fill="#fff" stroke="#000" stroke-width="1.2"/><rect x="658.5" y="56" width="1" height="1" fill="#909090"/><rect x="661.5" y="56" width="1" height="1" fill="#909090"/><rect x="664.5" y="56" width="1" height="1" fill="#909090"/><rect x="658.5" y="59" width="1" height="1" fill="#909090"/><rect x="661.5" y="59" width="1" height="1" fill="#909090"/><rect x="664.5" y="59" width="1" height="1" fill="#909090"/><rect x="658.5" y="62" width="1" height="1" fill="#909090"/><rect x="661.5" y="62" width="1" height="1" fill="#909090"/><rect x="664.5" y="62" width="1" height="1" fill="#909090"/><rect x="658.5" y="65" width="1" height="1" fill="#909090"/><rect x="661.5" y="65" width="1" height="1" fill="#909090"/><rect x="664.5" y="65" width="1" height="1" fill="#909090"/><path d="M680.5 58.5H688.5L684.5 62.5Z" fill="#000"/><circle cx="704" cy="59.5" r="8" fill="none" stroke="#000" stroke-width="1.8"/><rect x="699.5" y="56" width="10" height="7.5" fill="#ffff66" stroke="#000" stroke-width="1"/><path d="M709.5 65.5L714.5 70" stroke="#000" stroke-width="2.2"/></svg>
<div class="r" style="left:238px;top:74px;width:1128px;height:1px;background:#a0a0a0;"></div>
<div class="r" style="left:238px;top:74px;width:1px;height:609px;background:#a0a0a0;"></div>
<div class="r" style="left:239px;top:75px;width:1127px;height:1px;background:#ffffff;"></div>
<div class="r" style="left:239px;top:75px;width:1px;height:607px;background:#ffffff;"></div>
<div class="r" style="left:260px;top:96px;width:1106px;height:1px;background:#a0a0a0;"></div>
<div class="r" style="left:260px;top:96px;width:1px;height:586px;background:#a0a0a0;"></div>
<div class="r" style="left:261px;top:97px;width:1105px;height:1px;background:#696969;"></div>
<div class="r" style="left:261px;top:97px;width:1px;height:585px;background:#696969;"></div>
<div class="r" style="left:262px;top:98px;width:1085px;height:564px;background:#fffff0;"></div>
<svg class="s" style="left:262px;top:98px;" width="1085" height="564" viewBox="0 0 1085 564" shape-rendering="crispEdges"><rect x="3" y="0" width="1" height="564" fill="#ededed"/><rect x="14" y="0" width="1" height="564" fill="#ededed"/><rect x="24" y="0" width="1" height="564" fill="#ededed"/><rect x="35" y="0" width="1" height="564" fill="#ededed"/><rect x="45" y="0" width="1" height="564" fill="#ededed"/><rect x="56" y="0" width="1" height="564" fill="#ededed"/><rect x="67" y="0" width="1" height="564" fill="#ededed"/><rect x="77" y="0" width="1" height="564" fill="#ededed"/><rect x="88" y="0" width="1" height="564" fill="#ededed"/><rect x="98" y="0" width="1" height="564" fill="#ededed"/><rect x="109" y="0" width="1" height="564" fill="#ededed"/><rect x="120" y="0" width="1" height="564" fill="#ededed"/><rect x="130" y="0" width="1" height="564" fill="#ededed"/><rect x="141" y="0" width="1" height="564" fill="#ededed"/><rect x="151" y="0" width="1" height="564" fill="#ededed"/><rect x="162" y="0" width="1" height="564" fill="#ededed"/><rect x="172" y="0" width="1" height="564" fill="#ededed"/><rect x="183" y="0" width="1" height="564" fill="#ededed"/><rect x="194" y="0" width="1" height="564" fill="#ededed"/><rect x="204" y="0" width="1" height="564" fill="#ededed"/><rect x="215" y="0" width="1" height="564" fill="#ededed"/><rect x="225" y="0" width="1" height="564" fill="#ededed"/><rect x="236" y="0" width="1" height="564" fill="#ededed"/><rect x="247" y="0" width="1" height="564" fill="#ededed"/><rect x="257" y="0" width="1" height="564" fill="#ededed"/><rect x="268" y="0" width="1" height="564" fill="#ededed"/><rect x="278" y="0" width="1" height="564" fill="#ededed"/><rect x="289" y="0" width="1" height="564" fill="#ededed"/><rect x="299" y="0" width="1" height="564" fill="#ededed"/><rect x="310" y="0" width="1" height="564" fill="#ededed"/><rect x="321" y="0" width="1" height="564" fill="#ededed"/><rect x="331" y="0" width="1" height="564" fill="#ededed"/><rect x="342" y="0" width="1" height="564" fill="#ededed"/><rect x="352" y="0" width="1" height="564" fill="#ededed"/><rect x="363" y="0" width="1" height="564" fill="#ededed"/><rect x="374" y="0" width="1" height="564" fill="#ededed"/><rect x="384" y="0" width="1" height="564" fill="#ededed"/><rect x="395" y="0" width="1" height="564" fill="#ededed"/><rect x="405" y="0" width="1" height="564" fill="#ededed"/><rect x="416" y="0" width="1" height="564" fill="#ededed"/><rect x="426" y="0" width="1" height="564" fill="#ededed"/><rect x="437" y="0" width="1" height="564" fill="#ededed"/><rect x="448" y="0" width="1" height="564" fill="#ededed"/><rect x="458" y="0" width="1" height="564" fill="#ededed"/><rect x="469" y="0" width="1" height="564" fill="#ededed"/><rect x="479" y="0" width="1" height="564" fill="#ededed"/><rect x="490" y="0" width="1" height="564" fill="#ededed"/><rect x="500" y="0" width="1" height="564" fill="#ededed"/><rect x="511" y="0" width="1" height="564" fill="#ededed"/><rect x="522" y="0" width="1" height="564" fill="#ededed"/><rect x="532" y="0" width="1" height="564" fill="#ededed"/><rect x="543" y="0" width="1" height="564" fill="#ededed"/><rect x="553" y="0" width="1" height="564" fill="#ededed"/><rect x="564" y="0" width="1" height="564" fill="#ededed"/><rect x="575" y="0" width="1" height="564" fill="#ededed"/><rect x="585" y="0" width="1" height="564" fill="#ededed"/><rect x="596" y="0" width="1" height="564" fill="#ededed"/><rect x="606" y="0" width="1" height="564" fill="#ededed"/><rect x="617" y="0" width="1" height="564" fill="#ededed"/><rect x="627" y="0" width="1" height="564" fill="#ededed"/><rect x="638" y="0" width="1" height="564" fill="#ededed"/><rect x="649" y="0" width="1" height="564" fill="#ededed"/><rect x="659" y="0" width="1" height="564" fill="#ededed"/><rect x="670" y="0" width="1" height="564" fill="#ededed"/><rect x="680" y="0" width="1" height="564" fill="#ededed"/><rect x="691" y="0" width="1" height="564" fill="#ededed"/><rect x="702" y="0" width="1" height="564" fill="#ededed"/><rect x="712" y="0" width="1" height="564" fill="#ededed"/><rect x="723" y="0" width="1" height="564" fill="#ededed"/><rect x="733" y="0" width="1" height="564" fill="#ededed"/><rect x="744" y="0" width="1" height="564" fill="#ededed"/><rect x="754" y="0" width="1" height="564" fill="#ededed"/><rect x="765" y="0" width="1" height="564" fill="#ededed"/><rect x="776" y="0" width="1" height="564" fill="#ededed"/><rect x="786" y="0" width="1" height="564" fill="#ededed"/><rect x="797" y="0" width="1" height="564" fill="#ededed"/><rect x="807" y="0" width="1" height="564" fill="#ededed"/><rect x="818" y="0" width="1" height="564" fill="#ededed"/><rect x="829" y="0" width="1" height="564" fill="#ededed"/><rect x="839" y="0" width="1" height="564" fill="#ededed"/><rect x="850" y="0" width="1" height="564" fill="#ededed"/><rect x="860" y="0" width="1" height="564" fill="#ededed"/><rect x="871" y="0" width="1" height="564" fill="#ededed"/><rect x="881" y="0" width="1" height="564" fill="#ededed"/><rect x="892" y="0" width="1" height="564" fill="#ededed"/><rect x="903" y="0" width="1" height="564" fill="#ededed"/><rect x="913" y="0" width="1" height="564" fill="#ededed"/><rect x="924" y="0" width="1" height="564" fill="#ededed"/><rect x="934" y="0" width="1" height="564" fill="#ededed"/><rect x="945" y="0" width="1" height="564" fill="#ededed"/><rect x="956" y="0" width="1" height="564" fill="#ededed"/><rect x="966" y="0" width="1" height="564" fill="#ededed"/><rect x="977" y="0" width="1" height="564" fill="#ededed"/><rect x="987" y="0" width="1" height="564" fill="#ededed"/><rect x="998" y="0" width="1" height="564" fill="#ededed"/><rect x="1008" y="0" width="1" height="564" fill="#ededed"/><rect x="1019" y="0" width="1" height="564" fill="#ededed"/><rect x="1030" y="0" width="1" height="564" fill="#ededed"/><rect x="1040" y="0" width="1" height="564" fill="#ededed"/><rect x="1051" y="0" width="1" height="564" fill="#ededed"/><rect x="1061" y="0" width="1" height="564" fill="#ededed"/><rect x="1072" y="0" width="1" height="564" fill="#ededed"/><rect x="1082" y="0" width="1" height="564" fill="#ededed"/><rect x="0" y="9" width="1085" height="1" fill="#ededed"/><rect x="0" y="19" width="1085" height="1" fill="#ededed"/><rect x="0" y="30" width="1085" height="1" fill="#ededed"/><rect x="0" y="40" width="1085" height="1" fill="#ededed"/><rect x="0" y="51" width="1085" height="1" fill="#ededed"/><rect x="0" y="62" width="1085" height="1" fill="#ededed"/><rect x="0" y="72" width="1085" height="1" fill="#ededed"/><rect x="0" y="83" width="1085" height="1" fill="#ededed"/><rect x="0" y="93" width="1085" height="1" fill="#ededed"/><rect x="0" y="104" width="1085" height="1" fill="#ededed"/><rect x="0" y="115" width="1085" height="1" fill="#ededed"/><rect x="0" y="125" width="1085" height="1" fill="#ededed"/><rect x="0" y="136" width="1085" height="1" fill="#ededed"/><rect x="0" y="146" width="1085" height="1" fill="#ededed"/><rect x="0" y="157" width="1085" height="1" fill="#ededed"/><rect x="0" y="167" width="1085" height="1" fill="#ededed"/><rect x="0" y="178" width="1085" height="1" fill="#ededed"/><rect x="0" y="189" width="1085" height="1" fill="#ededed"/><rect x="0" y="199" width="1085" height="1" fill="#ededed"/><rect x="0" y="210" width="1085" height="1" fill="#ededed"/><rect x="0" y="220" width="1085" height="1" fill="#ededed"/><rect x="0" y="231" width="1085" height="1" fill="#ededed"/><rect x="0" y="242" width="1085" height="1" fill="#ededed"/><rect x="0" y="252" width="1085" height="1" fill="#ededed"/><rect x="0" y="263" width="1085" height="1" fill="#ededed"/><rect x="0" y="273" width="1085" height="1" fill="#ededed"/><rect x="0" y="284" width="1085" height="1" fill="#ededed"/><rect x="0" y="294" width="1085" height="1" fill="#ededed"/><rect x="0" y="305" width="1085" height="1" fill="#ededed"/><rect x="0" y="316" width="1085" height="1" fill="#ededed"/><rect x="0" y="326" width="1085" height="1" fill="#ededed"/><rect x="0" y="337" width="1085" height="1" fill="#ededed"/><rect x="0" y="347" width="1085" height="1" fill="#ededed"/><rect x="0" y="358" width="1085" height="1" fill="#ededed"/><rect x="0" y="368" width="1085" height="1" fill="#ededed"/><rect x="0" y="379" width="1085" height="1" fill="#ededed"/><rect x="0" y="390" width="1085" height="1" fill="#ededed"/><rect x="0" y="400" width="1085" height="1" fill="#ededed"/><rect x="0" y="411" width="1085" height="1" fill="#ededed"/><rect x="0" y="421" width="1085" height="1" fill="#ededed"/><rect x="0" y="432" width="1085" height="1" fill="#ededed"/><rect x="0" y="443" width="1085" height="1" fill="#ededed"/><rect x="0" y="453" width="1085" height="1" fill="#ededed"/><rect x="0" y="464" width="1085" height="1" fill="#ededed"/><rect x="0" y="474" width="1085" height="1" fill="#ededed"/><rect x="0" y="485" width="1085" height="1" fill="#ededed"/><rect x="0" y="495" width="1085" height="1" fill="#ededed"/><rect x="0" y="506" width="1085" height="1" fill="#ededed"/><rect x="0" y="517" width="1085" height="1" fill="#ededed"/><rect x="0" y="527" width="1085" height="1" fill="#ededed"/><rect x="0" y="538" width="1085" height="1" fill="#ededed"/><rect x="0" y="548" width="1085" height="1" fill="#ededed"/><rect x="0" y="559" width="1085" height="1" fill="#ededed"/></svg>
<svg class="s" style="left:0px;top:0px;" width="1366" height="700" viewBox="0 0 1366 700" shape-rendering="crispEdges"><rect x="265" y="94" width="1" height="2" fill="#000"/><rect x="276" y="94" width="1" height="2" fill="#000"/><rect x="286" y="94" width="1" height="2" fill="#000"/><rect x="297" y="90" width="1" height="6" fill="#000"/><rect x="307" y="94" width="1" height="2" fill="#000"/><rect x="318" y="94" width="1" height="2" fill="#000"/><rect x="329" y="94" width="1" height="2" fill="#000"/><rect x="339" y="94" width="1" height="2" fill="#000"/><rect x="350" y="90" width="1" height="6" fill="#000"/><rect x="360" y="94" width="1" height="2" fill="#000"/><rect x="371" y="94" width="1" height="2" fill="#000"/><rect x="381" y="94" width="1" height="2" fill="#000"/><rect x="392" y="94" width="1" height="2" fill="#000"/><rect x="403" y="90" width="1" height="6" fill="#000"/><rect x="413" y="94" width="1" height="2" fill="#000"/><rect x="424" y="94" width="1" height="2" fill="#000"/><rect x="434" y="94" width="1" height="2" fill="#000"/><rect x="445" y="94" width="1" height="2" fill="#000"/><rect x="455" y="90" width="1" height="6" fill="#000"/><rect x="466" y="94" width="1" height="2" fill="#000"/><rect x="477" y="94" width="1" height="2" fill="#000"/><rect x="487" y="94" width="1" height="2" fill="#000"/><rect x="498" y="94" width="1" height="2" fill="#000"/><rect x="508" y="90" width="1" height="6" fill="#000"/><rect x="519" y="94" width="1" height="2" fill="#000"/><rect x="530" y="94" width="1" height="2" fill="#000"/><rect x="540" y="94" width="1" height="2" fill="#000"/><rect x="551" y="94" width="1" height="2" fill="#000"/><rect x="561" y="90" width="1" height="6" fill="#000"/><rect x="572" y="94" width="1" height="2" fill="#000"/><rect x="582" y="94" width="1" height="2" fill="#000"/><rect x="593" y="94" width="1" height="2" fill="#000"/><rect x="604" y="94" width="1" height="2" fill="#000"/><rect x="614" y="90" width="1" height="6" fill="#000"/><rect x="625" y="94" width="1" height="2" fill="#000"/><rect x="635" y="94" width="1" height="2" fill="#000"/><rect x="646" y="94" width="1" height="2" fill="#000"/><rect x="656" y="94" width="1" height="2" fill="#000"/><rect x="667" y="90" width="1" height="6" fill="#000"/><rect x="678" y="94" width="1" height="2" fill="#000"/><rect x="688" y="94" width="1" height="2" fill="#000"/><rect x="699" y="94" width="1" height="2" fill="#000"/><rect x="709" y="94" width="1" height="2" fill="#000"/><rect x="720" y="90" width="1" height="6" fill="#000"/><rect x="731" y="94" width="1" height="2" fill="#000"/><rect x="741" y="94" width="1" height="2" fill="#000"/><rect x="752" y="94" width="1" height="2" fill="#000"/><rect x="762" y="94" width="1" height="2" fill="#000"/><rect x="773" y="90" width="1" height="6" fill="#000"/><rect x="783" y="94" width="1" height="2" fill="#000"/><rect x="794" y="94" width="1" height="2" fill="#000"/><rect x="805" y="94" width="1" height="2" fill="#000"/><rect x="815" y="94" width="1" height="2" fill="#000"/><rect x="826" y="90" width="1" height="6" fill="#000"/><rect x="836" y="94" width="1" height="2" fill="#000"/><rect x="847" y="94" width="1" height="2" fill="#000"/><rect x="857" y="94" width="1" height="2" fill="#000"/><rect x="868" y="94" width="1" height="2" fill="#000"/><rect x="879" y="90" width="1" height="6" fill="#000"/><rect x="889" y="94" width="1" height="2" fill="#000"/><rect x="900" y="94" width="1" height="2" fill="#000"/><rect x="910" y="94" width="1" height="2" fill="#000"/><rect x="921" y="94" width="1" height="2" fill="#000"/><rect x="932" y="90" width="1" height="6" fill="#000"/><rect x="942" y="94" width="1" height="2" fill="#000"/><rect x="953" y="94" width="1" height="2" fill="#000"/><rect x="963" y="94" width="1" height="2" fill="#000"/><rect x="974" y="94" width="1" height="2" fill="#000"/><rect x="984" y="90" width="1" height="6" fill="#000"/><rect x="995" y="94" width="1" height="2" fill="#000"/><rect x="1006" y="94" width="1" height="2" fill="#000"/><rect x="1016" y="94" width="1" height="2" fill="#000"/><rect x="1027" y="94" width="1" height="2" fill="#000"/><rect x="1037" y="90" width="1" height="6" fill="#000"/><rect x="1048" y="94" width="1" height="2" fill="#000"/><rect x="1058" y="94" width="1" height="2" fill="#000"/><rect x="1069" y="94" width="1" height="2" fill="#000"/><rect x="1080" y="94" width="1" height="2" fill="#000"/><rect x="1090" y="90" width="1" height="6" fill="#000"/><rect x="1101" y="94" width="1" height="2" fill="#000"/><rect x="1111" y="94" width="1" height="2" fill="#000"/><rect x="1122" y="94" width="1" height="2" fill="#000"/><rect x="1133" y="94" width="1" height="2" fill="#000"/><rect x="1143" y="90" width="1" height="6" fill="#000"/><rect x="1154" y="94" width="1" height="2" fill="#000"/><rect x="1164" y="94" width="1" height="2" fill="#000"/><rect x="1175" y="94" width="1" height="2" fill="#000"/><rect x="1185" y="94" width="1" height="2" fill="#000"/><rect x="1196" y="90" width="1" height="6" fill="#000"/><rect x="1207" y="94" width="1" height="2" fill="#000"/><rect x="1217" y="94" width="1" height="2" fill="#000"/><rect x="1228" y="94" width="1" height="2" fill="#000"/><rect x="1238" y="94" width="1" height="2" fill="#000"/><rect x="1249" y="90" width="1" height="6" fill="#000"/><rect x="1259" y="94" width="1" height="2" fill="#000"/><rect x="1270" y="94" width="1" height="2" fill="#000"/><rect x="1281" y="94" width="1" height="2" fill="#000"/><rect x="1291" y="94" width="1" height="2" fill="#000"/><rect x="1302" y="90" width="1" height="6" fill="#000"/><rect x="1312" y="94" width="1" height="2" fill="#000"/><rect x="1323" y="94" width="1" height="2" fill="#000"/><rect x="1333" y="94" width="1" height="2" fill="#000"/><rect x="1344" y="94" width="1" height="2" fill="#000"/><rect x="1355" y="90" width="1" height="6" fill="#000"/><rect x="1365" y="94" width="1" height="2" fill="#000"/><rect x="255" y="96" width="5" height="1" fill="#000"/><rect x="258" y="107" width="2" height="1" fill="#000"/><rect x="258" y="117" width="2" height="1" fill="#000"/><rect x="258" y="128" width="2" height="1" fill="#000"/><rect x="258" y="138" width="2" height="1" fill="#000"/><rect x="255" y="149" width="5" height="1" fill="#000"/><rect x="258" y="160" width="2" height="1" fill="#000"/><rect x="258" y="170" width="2" height="1" fill="#000"/><rect x="258" y="181" width="2" height="1" fill="#000"/><rect x="258" y="191" width="2" height="1" fill="#000"/><rect x="255" y="202" width="5" height="1" fill="#000"/><rect x="258" y="212" width="2" height="1" fill="#000"/><rect x="258" y="223" width="2" height="1" fill="#000"/><rect x="258" y="234" width="2" height="1" fill="#000"/><rect x="258" y="244" width="2" height="1" fill="#000"/><rect x="255" y="255" width="5" height="1" fill="#000"/><rect x="258" y="265" width="2" height="1" fill="#000"/><rect x="258" y="276" width="2" height="1" fill="#000"/><rect x="258" y="286" width="2" height="1" fill="#000"/><rect x="258" y="297" width="2" height="1" fill="#000"/><rect x="255" y="308" width="5" height="1" fill="#000"/><rect x="258" y="318" width="2" height="1" fill="#000"/><rect x="258" y="329" width="2" height="1" fill="#000"/><rect x="258" y="339" width="2" height="1" fill="#000"/><rect x="258" y="350" width="2" height="1" fill="#000"/><rect x="255" y="361" width="5" height="1" fill="#000"/><rect x="258" y="371" width="2" height="1" fill="#000"/><rect x="258" y="382" width="2" height="1" fill="#000"/><rect x="258" y="392" width="2" height="1" fill="#000"/><rect x="258" y="403" width="2" height="1" fill="#000"/><rect x="255" y="413" width="5" height="1" fill="#000"/><rect x="258" y="424" width="2" height="1" fill="#000"/><rect x="258" y="435" width="2" height="1" fill="#000"/><rect x="258" y="445" width="2" height="1" fill="#000"/><rect x="258" y="456" width="2" height="1" fill="#000"/><rect x="255" y="466" width="5" height="1" fill="#000"/><rect x="258" y="477" width="2" height="1" fill="#000"/><rect x="258" y="488" width="2" height="1" fill="#000"/><rect x="258" y="498" width="2" height="1" fill="#000"/><rect x="258" y="509" width="2" height="1" fill="#000"/><rect x="255" y="519" width="5" height="1" fill="#000"/><rect x="258" y="530" width="2" height="1" fill="#000"/><rect x="258" y="540" width="2" height="1" fill="#000"/><rect x="258" y="551" width="2" height="1" fill="#000"/><rect x="258" y="562" width="2" height="1" fill="#000"/><rect x="255" y="572" width="5" height="1" fill="#000"/><rect x="258" y="583" width="2" height="1" fill="#000"/><rect x="258" y="593" width="2" height="1" fill="#000"/><rect x="258" y="604" width="2" height="1" fill="#000"/><rect x="258" y="614" width="2" height="1" fill="#000"/><rect x="255" y="625" width="5" height="1" fill="#000"/><rect x="258" y="636" width="2" height="1" fill="#000"/><rect x="258" y="646" width="2" height="1" fill="#000"/><rect x="258" y="657" width="2" height="1" fill="#000"/><rect x="258" y="667" width="2" height="1" fill="#000"/><rect x="255" y="678" width="5" height="1" fill="#000"/></svg>
<div class="t" style="left:290.84px;top:78.01px;font-size:11.8px;line-height:11.8px;color:#000;font-weight:normal;font-style:normal;transform:scaleX(1.0169);transform-origin:0 0;">55</div>
<div class="t" style="left:343.75px;top:78.01px;font-size:11.8px;line-height:11.8px;color:#000;font-weight:normal;font-style:normal;transform:scaleX(1.0169);transform-origin:0 0;">60</div>
<div class="t" style="left:396.77px;top:78.01px;font-size:11.8px;line-height:11.8px;color:#000;font-weight:normal;font-style:normal;transform:scaleX(1.0169);transform-origin:0 0;">65</div>
<div class="t" style="left:448.75px;top:78.01px;font-size:11.8px;line-height:11.8px;color:#000;font-weight:normal;font-style:normal;transform:scaleX(1.0169);transform-origin:0 0;">70</div>
<div class="t" style="left:501.77px;top:78.01px;font-size:11.8px;line-height:11.8px;color:#000;font-weight:normal;font-style:normal;transform:scaleX(1.0169);transform-origin:0 0;">75</div>
<div class="t" style="left:554.80px;top:78.01px;font-size:11.8px;line-height:11.8px;color:#000;font-weight:normal;font-style:normal;transform:scaleX(1.0169);transform-origin:0 0;">80</div>
<div class="t" style="left:607.82px;top:78.01px;font-size:11.8px;line-height:11.8px;color:#000;font-weight:normal;font-style:normal;transform:scaleX(1.0169);transform-origin:0 0;">85</div>
<div class="t" style="left:660.78px;top:78.01px;font-size:11.8px;line-height:11.8px;color:#000;font-weight:normal;font-style:normal;transform:scaleX(1.0169);transform-origin:0 0;">90</div>
<div class="t" style="left:713.80px;top:78.01px;font-size:11.8px;line-height:11.8px;color:#000;font-weight:normal;font-style:normal;transform:scaleX(1.0169);transform-origin:0 0;">95</div>
<div class="t" style="left:763.26px;top:78.01px;font-size:11.8px;line-height:11.8px;color:#000;font-weight:normal;font-style:normal;transform:scaleX(1.0169);transform-origin:0 0;">100</div>
<div class="t" style="left:816.29px;top:78.01px;font-size:11.8px;line-height:11.8px;color:#000;font-weight:normal;font-style:normal;transform:scaleX(1.0169);transform-origin:0 0;">105</div>
<div class="t" style="left:869.71px;top:78.01px;font-size:11.8px;line-height:11.8px;color:#000;font-weight:normal;font-style:normal;transform:scaleX(1.0169);transform-origin:0 0;">110</div>
<div class="t" style="left:922.74px;top:78.01px;font-size:11.8px;line-height:11.8px;color:#000;font-weight:normal;font-style:normal;transform:scaleX(1.0169);transform-origin:0 0;">115</div>
<div class="t" style="left:974.26px;top:78.01px;font-size:11.8px;line-height:11.8px;color:#000;font-weight:normal;font-style:normal;transform:scaleX(1.0169);transform-origin:0 0;">120</div>
<div class="t" style="left:1027.29px;top:78.01px;font-size:11.8px;line-height:11.8px;color:#000;font-weight:normal;font-style:normal;transform:scaleX(1.0169);transform-origin:0 0;">125</div>
<div class="t" style="left:1080.26px;top:78.01px;font-size:11.8px;line-height:11.8px;color:#000;font-weight:normal;font-style:normal;transform:scaleX(1.0169);transform-origin:0 0;">130</div>
<div class="t" style="left:1133.29px;top:78.01px;font-size:11.8px;line-height:11.8px;color:#000;font-weight:normal;font-style:normal;transform:scaleX(1.0169);transform-origin:0 0;">135</div>
<div class="t" style="left:1186.26px;top:78.01px;font-size:11.8px;line-height:11.8px;color:#000;font-weight:normal;font-style:normal;transform:scaleX(1.0169);transform-origin:0 0;">140</div>
<div class="t" style="left:1239.29px;top:78.01px;font-size:11.8px;line-height:11.8px;color:#000;font-weight:normal;font-style:normal;transform:scaleX(1.0169);transform-origin:0 0;">145</div>
<div class="t" style="left:1292.26px;top:78.01px;font-size:11.8px;line-height:11.8px;color:#000;font-weight:normal;font-style:normal;transform:scaleX(1.0169);transform-origin:0 0;">150</div>
<div class="t" style="left:1345.29px;top:78.01px;font-size:11.8px;line-height:11.8px;color:#000;font-weight:normal;font-style:normal;transform:scaleX(1.0169);transform-origin:0 0;">155</div>
<svg class="s" style="left:0;top:0" width="262" height="690" viewBox="0 0 262 690"><defs><clipPath id="vr"><rect x="240" y="98" width="21" height="583"/></clipPath></defs><g clip-path="url(#vr)"><text transform="translate(251.3,155.95) rotate(-90)" x="0" y="0" font-family="Liberation Sans" font-size="11.8" fill="#000">45</text><text transform="translate(251.3,209.07) rotate(-90)" x="0" y="0" font-family="Liberation Sans" font-size="11.8" fill="#000">50</text><text transform="translate(251.3,262.05) rotate(-90)" x="0" y="0" font-family="Liberation Sans" font-size="11.8" fill="#000">55</text><text transform="translate(251.3,315.14) rotate(-90)" x="0" y="0" font-family="Liberation Sans" font-size="11.8" fill="#000">60</text><text transform="translate(251.3,368.12) rotate(-90)" x="0" y="0" font-family="Liberation Sans" font-size="11.8" fill="#000">65</text><text transform="translate(251.3,420.14) rotate(-90)" x="0" y="0" font-family="Liberation Sans" font-size="11.8" fill="#000">70</text><text transform="translate(251.3,473.12) rotate(-90)" x="0" y="0" font-family="Liberation Sans" font-size="11.8" fill="#000">75</text><text transform="translate(251.3,526.09) rotate(-90)" x="0" y="0" font-family="Liberation Sans" font-size="11.8" fill="#000">80</text><text transform="translate(251.3,579.07) rotate(-90)" x="0" y="0" font-family="Liberation Sans" font-size="11.8" fill="#000">85</text><text transform="translate(251.3,632.11) rotate(-90)" x="0" y="0" font-family="Liberation Sans" font-size="11.8" fill="#000">90</text><text transform="translate(251.3,685.09) rotate(-90)" x="0" y="0" font-family="Liberation Sans" font-size="11.8" fill="#000">95</text></g></svg>
<svg class="s" style="left:240px;top:77px;" width="20" height="16" viewBox="0 0 20 16" shape-rendering="crispEdges"><g fill="#808080"><rect x="5" y="2" width="1" height="1"/><rect x="5" y="6" width="1" height="1"/><rect x="5" y="8" width="1" height="1"/><rect x="5" y="10" width="1" height="1"/><rect x="5" y="12" width="1" height="1"/><rect x="5" y="14" width="1" height="1"/><rect x="3" y="4" width="1" height="1"/><rect x="7" y="4" width="1" height="1"/><rect x="9" y="4" width="1" height="1"/><rect x="11" y="4" width="1" height="1"/><rect x="13" y="4" width="1" height="1"/><rect x="15" y="4" width="1" height="1"/></g><rect x="5" y="4" width="1" height="1" fill="#000"/><path d="M7.5 6.5L12.5 11.5M12.5 8V11.5H9" stroke="#000" fill="none" stroke-width="1.2"/></svg>
<div class="r" style="left:602px;top:158px;width:215px;height:390px;background:#ffffff;"></div>
<div class="r" style="left:602px;top:158px;width:215px;height:4px;background:#000;"></div>
<div class="r" style="left:602px;top:544px;width:215px;height:4px;background:#000;"></div>
<div class="r" style="left:602px;top:158px;width:4px;height:390px;background:#000;"></div>
<div class="r" style="left:813px;top:158px;width:4px;height:390px;background:#000;"></div>
<div class="r" style="left:551px;top:190px;width:51px;height:2px;background:#000;"></div>
<div class="r" style="left:817px;top:190px;width:52px;height:2px;background:#000;"></div>
<div class="r" style="left:551px;top:243px;width:51px;height:2px;background:#000;"></div>
<div class="r" style="left:817px;top:243px;width:52px;height:2px;background:#000;"></div>
<div class="r" style="left:551px;top:296px;width:51px;height:2px;background:#000;"></div>
<div class="r" style="left:817px;top:296px;width:52px;height:2px;background:#000;"></div>
<div class="r" style="left:551px;top:349px;width:51px;height:2px;background:#000;"></div>
<div class="r" style="left:817px;top:349px;width:52px;height:2px;background:#000;"></div>
<div class="r" style="left:551px;top:402px;width:51px;height:2px;background:#000;"></div>
<div class="r" style="left:817px;top:402px;width:52px;height:2px;background:#000;"></div>
<div class="r" style="left:551px;top:455px;width:51px;height:2px;background:#000;"></div>
<div class="r" style="left:817px;top:455px;width:52px;height:2px;background:#000;"></div>
<div class="r" style="left:551px;top:508px;width:51px;height:2px;background:#000;"></div>
<div class="r" style="left:817px;top:508px;width:52px;height:2px;background:#000;"></div>
<div class="t" style="left:582.80px;top:167.45px;font-size:20.5px;line-height:20.5px;color:#000;font-weight:normal;font-style:normal;-webkit-text-stroke:0.3px #000;">1</div>
<div class="t" style="left:825.94px;top:167.45px;font-size:20.5px;line-height:20.5px;color:#000;font-weight:normal;font-style:normal;-webkit-text-stroke:0.3px #000;">14</div>
<div class="t" style="left:582.82px;top:220.34px;font-size:20.5px;line-height:20.5px;color:#000;font-weight:normal;font-style:normal;-webkit-text-stroke:0.3px #000;">2</div>
<div class="t" style="left:825.94px;top:220.34px;font-size:20.5px;line-height:20.5px;color:#000;font-weight:normal;font-style:normal;-webkit-text-stroke:0.3px #000;">13</div>
<div class="t" style="left:582.69px;top:273.23px;font-size:20.5px;line-height:20.5px;color:#000;font-weight:normal;font-style:normal;-webkit-text-stroke:0.3px #000;">3</div>
<div class="t" style="left:825.94px;top:273.23px;font-size:20.5px;line-height:20.5px;color:#000;font-weight:normal;font-style:normal;-webkit-text-stroke:0.3px #000;">12</div>
<div class="t" style="left:582.39px;top:326.12px;font-size:20.5px;line-height:20.5px;color:#000;font-weight:normal;font-style:normal;-webkit-text-stroke:0.3px #000;">4</div>
<div class="t" style="left:825.94px;top:326.12px;font-size:20.5px;line-height:20.5px;color:#000;font-weight:normal;font-style:normal;-webkit-text-stroke:0.3px #000;">11</div>
<div class="t" style="left:582.67px;top:379.01px;font-size:20.5px;line-height:20.5px;color:#000;font-weight:normal;font-style:normal;-webkit-text-stroke:0.3px #000;">5</div>
<div class="t" style="left:825.94px;top:379.01px;font-size:20.5px;line-height:20.5px;color:#000;font-weight:normal;font-style:normal;-webkit-text-stroke:0.3px #000;">10</div>
<div class="t" style="left:582.69px;top:431.90px;font-size:20.5px;line-height:20.5px;color:#000;font-weight:normal;font-style:normal;-webkit-text-stroke:0.3px #000;">6</div>
<div class="t" style="left:826.55px;top:431.90px;font-size:20.5px;line-height:20.5px;color:#000;font-weight:normal;font-style:normal;-webkit-text-stroke:0.3px #000;">9</div>
<div class="t" style="left:582.82px;top:484.79px;font-size:20.5px;line-height:20.5px;color:#000;font-weight:normal;font-style:normal;-webkit-text-stroke:0.3px #000;">7</div>
<div class="t" style="left:826.60px;top:484.79px;font-size:20.5px;line-height:20.5px;color:#000;font-weight:normal;font-style:normal;-webkit-text-stroke:0.3px #000;">8</div>
<div class="t" style="left:688.62px;top:120.73px;font-size:28.2px;line-height:28.2px;color:#000;font-weight:normal;font-style:normal;transform:scaleX(0.8746);transform-origin:0 0;">IC1</div>
<div class="t" style="left:666.98px;top:557.18px;font-size:22px;line-height:22px;color:#000;font-weight:normal;font-style:normal;transform:scaleX(1.0041);transform-origin:0 0;-webkit-text-stroke:0.3px #000;">DIL 14</div>
<div class="r" style="left:455px;top:190px;width:21px;height:2px;background:#000;"></div>
<div class="r" style="left:531px;top:190px;width:71px;height:2px;background:#000;"></div>
<div class="r" style="left:476px;top:180px;width:55px;height:23px;background:#000;"></div>
<div class="r" style="left:478px;top:182px;width:51px;height:19px;background:#ffffff;"></div>
<div class="r" style="left:502px;top:160px;width:2px;height:12px;background:#000;"></div>
<svg class="s" style="left:496px;top:168px;" width="14" height="13" viewBox="0 0 14 13"><path d="M1.5 1.5H12.5L7 12Z" fill="#000" stroke="#000" stroke-width="1"/></svg>
<div class="r" style="left:455px;top:243px;width:21px;height:2px;background:#000;"></div>
<div class="r" style="left:531px;top:243px;width:71px;height:2px;background:#000;"></div>
<div class="r" style="left:476px;top:233px;width:55px;height:23px;background:#000;"></div>
<div class="r" style="left:478px;top:235px;width:51px;height:19px;background:#ffffff;"></div>
<div class="t" style="left:466.63px;top:204.36px;font-size:20.6px;line-height:20.6px;color:#000;font-weight:normal;font-style:italic;transform:scaleX(0.8783);transform-origin:0 0;-webkit-text-stroke:0.3px #000;">R2</div>
<div class="t" style="left:488.15px;top:204.36px;font-size:20.6px;line-height:20.6px;color:#000;font-weight:normal;font-style:italic;transform:scaleX(0.8496);transform-origin:0 0;-webkit-text-stroke:0.3px #000;">R3 1k</div>
<div class="t" style="left:490.46px;top:257.45px;font-size:20.5px;line-height:20.5px;color:#000;font-weight:normal;font-style:italic;transform:scaleX(0.8151);transform-origin:0 0;-webkit-text-stroke:0.3px #000;">1k</div>
<div class="r" style="left:455px;top:349px;width:28px;height:2px;background:#000;"></div>
<div class="r" style="left:535px;top:349px;width:67px;height:2px;background:#000;"></div>
<svg class="s" style="left:440px;top:320px;" width="110" height="60" viewBox="0 0 110 60"><path d="M42.3 30.0 L47.0 45.7 L58.0 14.3 L68.4 45.7 L79.3 14.3 L90.3 45.7 L95.7 30.0" fill="none" stroke="#000" stroke-width="2.2" stroke-linejoin="miter"/></svg>
<div class="r" style="left:507px;top:384px;width:2px;height:20px;background:#000;"></div>
<svg class="s" style="left:502px;top:370px;" width="13" height="16" viewBox="0 0 13 16"><path d="M6.5 1L12 15H1Z" fill="#000"/></svg>
<div class="t" style="left:498.37px;top:288.35px;font-size:21.8px;line-height:21.8px;color:#000;font-weight:normal;font-style:normal;transform:scaleX(0.9037);transform-origin:0 0;-webkit-text-stroke:0.3px #000;">R4</div>
<div class="t" style="left:498.52px;top:310.02px;font-size:21px;line-height:21px;color:#000;font-weight:normal;font-style:normal;transform:scaleX(0.9269);transform-origin:0 0;-webkit-text-stroke:0.3px #000;">1k</div><div class="r" style="left:392px;top:76px;width:1px;height:18px;background:#0000ff;"></div>
<div class="r" style="left:392px;top:94px;width:1px;height:2px;background:#ffff00;"></div>
<div class="r" style="left:240px;top:361px;width:15px;height:1px;background:#0000ff;"></div>
<div class="r" style="left:255px;top:361px;width:5px;height:1px;background:#ffff00;"></div>
<div class="r" style="left:1347px;top:98px;width:17px;height:564px;background:repeating-conic-gradient(#f0f0f0 0 25%, #ffffff 0 50%) 0 0/2px 2px;"></div>
<div class="r" style="left:1347px;top:98px;width:17px;height:17px;background:#696969;"></div>
<div class="r" style="left:1347px;top:98px;width:16px;height:16px;background:#e3e3e3;"></div>
<div class="r" style="left:1348px;top:99px;width:15px;height:15px;background:#a0a0a0;"></div>
<div class="r" style="left:1348px;top:99px;width:14px;height:14px;background:#ffffff;"></div>
<div class="r" style="left:1349px;top:100px;width:13px;height:13px;background:#f0f0f0;"></div>
<svg class="s" style="left:1352px;top:104px;" width="7" height="4" viewBox="0 0 7 4"><path d="M0 4H7L3.5 0Z" fill="#000"/></svg>
<div class="r" style="left:1347px;top:217px;width:17px;height:134px;background:#696969;"></div>
<div class="r" style="left:1347px;top:217px;width:16px;height:133px;background:#e3e3e3;"></div>
<div class="r" style="left:1348px;top:218px;width:15px;height:132px;background:#a0a0a0;"></div>
<div class="r" style="left:1348px;top:218px;width:14px;height:131px;background:#ffffff;"></div>
<div class="r" style="left:1349px;top:219px;width:13px;height:130px;background:#f0f0f0;"></div>
<div class="r" style="left:1347px;top:645px;width:17px;height:17px;background:#696969;"></div>
<div class="r" style="left:1347px;top:645px;width:16px;height:16px;background:#e3e3e3;"></div>
<div class="r" style="left:1348px;top:646px;width:15px;height:15px;background:#a0a0a0;"></div>
<div class="r" style="left:1348px;top:646px;width:14px;height:14px;background:#ffffff;"></div>
<div class="r" style="left:1349px;top:647px;width:13px;height:13px;background:#f0f0f0;"></div>
<svg class="s" style="left:1352px;top:652px;" width="7" height="4" viewBox="0 0 7 4"><path d="M0 0H7L3.5 4Z" fill="#000"/></svg>
<div class="r" style="left:262px;top:662px;width:1102px;height:17px;background:repeating-conic-gradient(#f0f0f0 0 25%, #ffffff 0 50%) 0 0/2px 2px;"></div>
<div class="r" style="left:262px;top:662px;width:17px;height:17px;background:#f0f0f0;"></div>
<svg class="s" style="left:266px;top:665px;" width="10" height="11" viewBox="0 0 10 11"><path d="M7 1L2 5.5L7 10" stroke="#606060" stroke-width="2.2" fill="none"/></svg>
<div class="r" style="left:462px;top:662px;width:363px;height:17px;background:#696969;"></div>
<div class="r" style="left:462px;top:662px;width:362px;height:16px;background:#e3e3e3;"></div>
<div class="r" style="left:463px;top:663px;width:361px;height:15px;background:#a0a0a0;"></div>
<div class="r" style="left:463px;top:663px;width:360px;height:14px;background:#ffffff;"></div>
<div class="r" style="left:464px;top:664px;width:359px;height:13px;background:#f0f0f0;"></div>
<div class="r" style="left:1330px;top:662px;width:34px;height:17px;background:#f0f0f0;"></div>
<svg class="s" style="left:1334px;top:665px;" width="10" height="11" viewBox="0 0 10 11"><path d="M2 1L7 5.5L2 10" stroke="#606060" stroke-width="2.2" fill="none"/></svg>
<div class="r" style="left:238px;top:681px;width:1128px;height:1px;background:#a0a0a0;"></div>
<div class="r" style="left:238px;top:682px;width:1128px;height:1px;background:#696969;"></div>
<div class="r" style="left:1364px;top:97px;width:2px;height:586px;background:#ffffff;"></div>
<div class="r" style="left:238px;top:683px;width:1128px;height:17px;background:repeating-conic-gradient(#f0f0f0 0 25%, #ffffff 0 50%) 0 0/2px 2px;"></div>
<svg class="s" style="left:238px;top:680px;" width="100" height="20" viewBox="0 0 100 20"><path d="M8 1.5L13.5 17.5H91L96.5 1.5" fill="#f0f0f0" stroke="#696969" stroke-width="1.3"/><rect x="9" y="0" width="87" height="2.2" fill="#f0f0f0"/></svg>
<div class="t" style="left:252.08px;top:683.64px;font-size:12px;line-height:12px;color:#000;font-weight:normal;font-style:normal;transform:scaleX(0.8971);transform-origin:0 0;">1: Новый лист</div>
<div class="t" style="left:109.32px;top:684.64px;font-size:12px;line-height:12px;color:#000;font-weight:normal;font-style:normal;transform:scaleX(0.9430);transform-origin:0 0;">Стандартная</div>
<svg class="s" style="left:0;top:0" width="110" height="700" viewBox="0 0 110 700"><path d="M4.5 691H11M7.8 687.8V694.2" stroke="#000" stroke-width="2"/><path d="M19.5 691H26" stroke="#000" stroke-width="2"/><rect x="31.5" y="686.5" width="19" height="9" fill="#a6caf0" stroke="#000" stroke-width="1.2"/><text x="33.5" y="694" font-family="Liberation Sans" font-weight="bold" font-size="7.5" fill="#000">Blcl</text><path d="M32 687L50 695.5M32 695.5L50 687" stroke="#f00" stroke-width="1"/><path d="M62.5 686L59 690.5H61.5V695H63.5V690.5H66Z" fill="#000"/><path d="M77.5 695L74 690.5H76.5V686H78.5V690.5H81Z" fill="#000"/><path d="M90 690.5V693L97.5 697.5L104.5 691V687.5Z" fill="#fff" stroke="#000" stroke-width="1.1"/><path d="M90 690.5L98 683.5L104.5 687L97 694Z" fill="#a6caf0"/><path d="M98 683.5L104.5 687L97 694L90 690.5" fill="none" stroke="#000" stroke-width="1.2"/><path d="M91 690L98 684" stroke="#e8f2ff" stroke-width="0.8" stroke-dasharray="1 1"/><path d="M90.5 692L97 695.5L104 689" fill="none" stroke="#a6caf0" stroke-width="0.8"/></svg>
<div class="r" style="left:0px;top:700px;width:1366px;height:28px;background:#f0f0f0;"></div>
<div class="r" style="left:0px;top:702px;width:54px;height:26px;background:#f0f0f0;"></div>
<div class="r" style="left:0px;top:702px;width:54px;height:1px;background:#a0a0a0;"></div>
<div class="r" style="left:0px;top:702px;width:1px;height:26px;background:#a0a0a0;"></div>
<div class="r" style="left:53px;top:702px;width:1px;height:26px;background:#ffffff;"></div>
<div class="r" style="left:0px;top:727px;width:54px;height:1px;background:#ffffff;"></div>
<div class="r" style="left:56px;top:702px;width:60px;height:26px;background:#f0f0f0;"></div>
<div class="r" style="left:56px;top:702px;width:60px;height:1px;background:#a0a0a0;"></div>
<div class="r" style="left:56px;top:702px;width:1px;height:26px;background:#a0a0a0;"></div>
<div class="r" style="left:115px;top:702px;width:1px;height:26px;background:#ffffff;"></div>
<div class="r" style="left:56px;top:727px;width:60px;height:1px;background:#ffffff;"></div>
<div class="r" style="left:118px;top:702px;width:97px;height:26px;background:#f0f0f0;"></div>
<div class="r" style="left:118px;top:702px;width:97px;height:1px;background:#a0a0a0;"></div>
<div class="r" style="left:118px;top:702px;width:1px;height:26px;background:#a0a0a0;"></div>
<div class="r" style="left:214px;top:702px;width:1px;height:26px;background:#ffffff;"></div>
<div class="r" style="left:118px;top:727px;width:97px;height:1px;background:#ffffff;"></div>
<div class="r" style="left:218px;top:702px;width:176px;height:26px;background:#f0f0f0;"></div>
<div class="r" style="left:218px;top:702px;width:176px;height:1px;background:#a0a0a0;"></div>
<div class="r" style="left:218px;top:702px;width:1px;height:26px;background:#a0a0a0;"></div>
<div class="r" style="left:393px;top:702px;width:1px;height:26px;background:#ffffff;"></div>
<div class="r" style="left:218px;top:727px;width:176px;height:1px;background:#ffffff;"></div>
<div class="r" style="left:396px;top:702px;width:82px;height:26px;background:#f0f0f0;"></div>
<div class="r" style="left:396px;top:702px;width:82px;height:1px;background:#a0a0a0;"></div>
<div class="r" style="left:396px;top:702px;width:1px;height:26px;background:#a0a0a0;"></div>
<div class="r" style="left:477px;top:702px;width:1px;height:26px;background:#ffffff;"></div>
<div class="r" style="left:396px;top:727px;width:82px;height:1px;background:#ffffff;"></div>
<div class="r" style="left:480px;top:702px;width:88px;height:26px;background:#f0f0f0;"></div>
<div class="r" style="left:480px;top:702px;width:88px;height:1px;background:#a0a0a0;"></div>
<div class="r" style="left:480px;top:702px;width:1px;height:26px;background:#a0a0a0;"></div>
<div class="r" style="left:567px;top:702px;width:1px;height:26px;background:#ffffff;"></div>
<div class="r" style="left:480px;top:727px;width:88px;height:1px;background:#ffffff;"></div>
<div class="r" style="left:570px;top:702px;width:796px;height:26px;background:#f0f0f0;"></div>
<div class="r" style="left:570px;top:702px;width:796px;height:1px;background:#a0a0a0;"></div>
<div class="r" style="left:570px;top:702px;width:1px;height:26px;background:#a0a0a0;"></div>
<div class="r" style="left:1365px;top:702px;width:1px;height:26px;background:#ffffff;"></div>
<div class="r" style="left:570px;top:727px;width:796px;height:1px;background:#ffffff;"></div>
<div class="t" style="left:5.45px;top:703.08px;font-size:11.6px;line-height:11.6px;color:#000;font-weight:normal;font-style:normal;transform:scaleX(0.9654);transform-origin:0 0;">X: 64,0</div>
<div class="t" style="left:5.44px;top:714.68px;font-size:11.6px;line-height:11.6px;color:#000;font-weight:normal;font-style:normal;transform:scaleX(0.9828);transform-origin:0 0;">Y: 65,0</div>
<div class="t" style="left:123.23px;top:702.98px;font-size:11.6px;line-height:11.6px;color:#000;font-weight:normal;font-style:normal;transform:scaleX(0.9601);transform-origin:0 0;">Сетка:  1,0 mm</div>
<div class="t" style="left:123.70px;top:714.68px;font-size:11.6px;line-height:11.6px;color:#000;font-weight:normal;font-style:normal;transform:scaleX(0.9826);transform-origin:0 0;">Лупа:   3,52</div>
<div class="t" style="left:573.89px;top:702.68px;font-size:11.6px;line-height:11.6px;color:#000;font-weight:normal;font-style:normal;transform:scaleX(0.9701);transform-origin:0 0;">Указка: Выделение, перемещение, правка, копирование и т.д.</div>
<div class="t" style="left:574.34px;top:714.58px;font-size:11.6px;line-height:11.6px;color:#000;font-weight:normal;font-style:normal;transform:scaleX(0.9850);transform-origin:0 0;">&lt;Shift&gt;-отключить привязку к сетке, &lt;Space&gt;-масштаб</div>
<div class="t" style="left:312.94px;top:709.28px;font-size:11.6px;line-height:11.6px;color:#000;font-weight:normal;font-style:normal;transform:scaleX(1.0068);transform-origin:0 0;">45°</div>
<div class="t" style="left:363.60px;top:709.28px;font-size:11.6px;line-height:11.6px;color:#000;font-weight:normal;font-style:normal;transform:scaleX(1.0148);transform-origin:0 0;">10°</div>
<div class="r" style="left:401px;top:715px;width:44px;height:1px;background:#000;"></div>
<svg class="s" style="left:452px;top:706px;" width="21" height="18" viewBox="0 0 21 18"><rect x="1.7" y="1.7" width="17.6" height="14.6" fill="none" stroke="#000" stroke-width="1.5"/></svg>
<svg class="s" style="left:0;top:0" width="400" height="728" viewBox="0 0 400 728"><path d="M226 707V722M231 707V722M236 707V722M223 710H238M223 714.5H238M223 719H238" stroke="#000" stroke-width="1.2"/><path d="M249.3 710.2H254.8L260 715.5V719.3L259.4 719.6H255.6L254.3 717.6H250.2L249.3 715.8Z" fill="#f0f0f0" stroke="#800000" stroke-width="2.3" stroke-linejoin="round"/><path d="M250.6 711.5H254.3L259 716.6" fill="none" stroke="#000" stroke-width="0.9"/><path d="M251 720.5H254.5L255.5 721.5H259.5" fill="none" stroke="#000" stroke-width="1"/><rect x="277" y="713" width="2.5" height="10" fill="#808080"/><rect x="279" y="711" width="8" height="3" fill="#000"/><path d="M276 713H280L278 715.5Z" fill="#000"/><rect x="273.5" y="709.5" width="6" height="6" fill="none" stroke="#f00" stroke-width="1"/><path d="M297.5 708V719.5H309" fill="none" stroke="#000" stroke-width="1"/><path d="M299 718L307 710" stroke="#000" stroke-width="1" stroke-dasharray="1 1.5"/><path d="M359 712.5A4.2 4.2 0 1 0 359.5 716.5" fill="none" stroke="#000" stroke-width="1.3"/><path d="M356.5 711.5H360.5V708Z" fill="#000"/></svg>
<div class="r" style="left:0px;top:728px;width:1366px;height:40px;background:linear-gradient(90deg,#2a7fba 0%,#2b8cc7 34%,#2c93c8 65%,#2c99c9 100%);"></div>
<div class="r" style="left:0px;top:728px;width:1366px;height:1px;background:rgba(20,60,90,0.35);"></div>
<svg class="s" style="left:0;top:728px" width="1366" height="40" viewBox="0 728 1366 40"><path d="M207.3 728H218.8L181.8 768H170.3Z" fill="#2b5c73"/><path d="M525 728H543L506 768H488Z" fill="#2b5c73"/><path d="M952 728H974L937 768H915Z" fill="#2b5c73"/><path d="M11.5 737.2L22.7 735.6V746.7H11.5ZM24.3 735.4L38.4 733.4V746.7H24.3ZM11.5 748.3H22.7V759.5L11.5 757.9ZM24.3 748.3H38.4V761.6L24.3 759.6Z" fill="#fff"/><rect x="65.5" y="732.5" width="31" height="31" rx="3" fill="#db4b24" stroke="#f6c8b8" stroke-width="1"/><circle cx="81" cy="748" r="9.3" fill="none" stroke="#fff" stroke-width="2"/><rect x="80" y="742" width="2" height="11" fill="#fff"/><rect x="128" y="733" width="30" height="30" fill="#5a35ac"/><g transform="translate(143,748)"><polygon points="10.54,-2.36 10.54,2.36 7.30,2.75 7.10,3.22 9.12,5.79 5.79,9.12 3.22,7.10 2.75,7.30 2.36,10.54 -2.36,10.54 -2.75,7.30 -3.22,7.10 -5.79,9.12 -9.12,5.79 -7.10,3.22 -7.30,2.75 -10.54,2.36 -10.54,-2.36 -7.30,-2.75 -7.10,-3.22 -9.12,-5.79 -5.79,-9.12 -3.22,-7.10 -2.75,-7.30 -2.36,-10.54 2.36,-10.54 2.75,-7.30 3.22,-7.10 5.79,-9.12 9.12,-5.79 7.10,-3.22 7.30,-2.75" fill="#fff"/><circle r="4.3" fill="#5a35ac"/></g><path d="M189 740H196L197.5 736H205L206 739H220V762H189Z" fill="#e9c66a"/><rect x="190" y="742" width="30" height="20" fill="#f7df8e"/><rect x="198" y="737" width="3" height="2" fill="#2c2"/><rect x="202" y="739" width="3" height="2" fill="#d33"/><rect x="208" y="741" width="3" height="2" fill="#39f"/><path d="M193.5 762V751H215.5V762H211V756H198V762Z" fill="#a8d8f0" stroke="#e8f6ff" stroke-width="0.8"/><rect x="252.5" y="741" width="7" height="17" fill="#d8d8d8"/><rect x="253" y="742" width="2" height="3" fill="#3c3"/><path d="M259.5 735L282 737.5V756.5L259.5 754Z" fill="#e8e4cc"/><path d="M261 737L280.5 739V754.5L261 752.5Z" fill="#1010c0"/><path d="M269.5 738L280.5 739V754.5L273 753.5Z" fill="#7f86e8"/><ellipse cx="270" cy="758.5" rx="7.5" ry="2.8" fill="#dcdcdc"/><rect x="300.5" y="729.5" width="57" height="38" fill="rgba(255,255,255,0.2)" stroke="rgba(255,255,255,0.35)" stroke-width="1"/><g transform="translate(328.5,748.2)"><circle r="14" fill="#4a9a3c"/><path d="M0 0L-12.12 -7A14 14 0 0 1 12.12 -7Z" fill="#db3c2c"/><path d="M0 0L12.12 -7A14 14 0 0 1 0 14Z" fill="#f1c232"/><circle r="6.6" fill="#fff"/><circle r="5.2" fill="#3b7bd8"/></g><rect x="362.5" y="729.5" width="57" height="38" fill="rgba(255,255,255,0.32)" stroke="rgba(255,255,255,0.7)" stroke-width="1.2"/><path d="M379 737L396 754" stroke="#000" stroke-width="4.4" stroke-linecap="round"/><path d="M379.5 737.5L395.5 753.5" stroke="#c83800" stroke-width="2.2"/><path d="M380 739L395 754" stroke="#e8c000" stroke-width="1"/><circle cx="379.5" cy="737.5" r="1.8" fill="#e02020"/><circle cx="396.5" cy="754.5" r="1.2" fill="#ff0"/><rect x="1056.5" y="741.5" width="14" height="14" fill="#585858" stroke="#fff" stroke-width="1"/><rect x="1057" y="742" width="13" height="13" fill="none" stroke="#111" stroke-width="0.8"/><rect x="1058" y="743" width="11" height="7" fill="#8a8a8a"/><rect x="1058" y="751" width="5" height="3" fill="#999"/><rect x="1064" y="751" width="5" height="3" fill="#999"/><rect x="1079.5" y="741.5" width="15" height="14.5" fill="#3574c4" stroke="#102850" stroke-width="1"/><path d="M1083 741.5Q1090 748 1083 756" fill="none" stroke="#102850" stroke-width="1.5"/><text x="1080.5" y="752" font-family="Liberation Sans" font-weight="bold" font-size="5.5" fill="#fff">KMP</text><rect x="1103.5" y="740.5" width="15" height="16" rx="1.5" fill="#2d86d6" stroke="#bde" stroke-width="1"/><rect x="1107" y="742.5" width="8" height="6" fill="none" stroke="#fff" stroke-width="0.9"/><path d="M1104 756L1109 750" stroke="#f90" stroke-width="2"/><path d="M1111 752H1117M1111 754.5H1117" stroke="#fff" stroke-width="0.9"/><rect x="1128" y="740" width="5" height="5" fill="#888"/><rect x="1127" y="745" width="7" height="10" rx="1" fill="#777"/><rect x="1129.5" y="755" width="2" height="3" fill="#555"/><circle cx="1138.5" cy="751.5" r="4.8" fill="#2d9d2d"/><path d="M1136 751.5L1138 754L1141.5 748.5" stroke="#fff" stroke-width="1.4" fill="none"/><path d="M1152 741V757" stroke="#fff" stroke-width="1.6"/><path d="M1153 742.5Q1157 741 1160 743.5Q1163 745.5 1166 744.5L1164 748Q1166 749 1166 748.5Q1162 751 1159 749Q1156 747.5 1153 749Z" fill="#fff"/><path d="M1176 746H1179.5L1183.5 742V755.5L1179.5 751.5H1176Z" fill="#fff"/><path d="M1185.5 746Q1187 748.5 1185.5 751M1187.5 743.5Q1191 748.5 1187.5 754" fill="none" stroke="#fff" stroke-width="1.2"/><rect x="1205.5" y="742.5" width="9" height="14" rx="1" fill="none" stroke="#fff" stroke-width="1.3"/><rect x="1207.5" y="741" width="5" height="1.5" fill="#fff"/><rect x="1207" y="744.5" width="6" height="6" fill="#1f5f8a"/><rect x="1207" y="751.5" width="6" height="3.5" fill="#fff"/><rect x="1224" y="752" width="2.5" height="3" fill="#fff"/><rect x="1228" y="749" width="2.5" height="6" fill="#fff"/><rect x="1232" y="746" width="2.5" height="9" fill="#888"/><rect x="1236" y="743" width="2.5" height="12" fill="#888"/><path d="M1036.5 735.5L1039.5 737.8L1036.5 740M1040.5 735.5L1043.5 737.8L1040.5 740" fill="none" stroke="#fff" stroke-width="1.3"/></svg>
<div class="t" style="left:884.97px;top:741.03px;font-size:13.2px;line-height:13.2px;color:#fff;font-weight:normal;font-style:normal;transform:scaleX(0.9288);transform-origin:0 0;">Ссылки</div>
<div class="t" style="left:937.28px;top:741.03px;font-size:13.2px;line-height:13.2px;color:#fff;font-weight:normal;font-style:normal;transform:scaleX(0.9193);transform-origin:0 0;">Этот компьютер</div>
<div class="t" style="left:1252.49px;top:742.74px;font-size:12px;line-height:12px;color:#fff;font-weight:normal;font-style:normal;transform:scaleX(0.9204);transform-origin:0 0;">ENG</div>
<div class="t" style="left:1307.08px;top:734.23px;font-size:12.6px;line-height:12.6px;color:#fff;font-weight:normal;font-style:normal;transform:scaleX(0.8561);transform-origin:0 0;">16:43</div>
<div class="t" style="left:1292.76px;top:750.93px;font-size:12.6px;line-height:12.6px;color:#fff;font-weight:normal;font-style:normal;transform:scaleX(0.8627);transform-origin:0 0;">25.08.2015</div>
</body></html>
